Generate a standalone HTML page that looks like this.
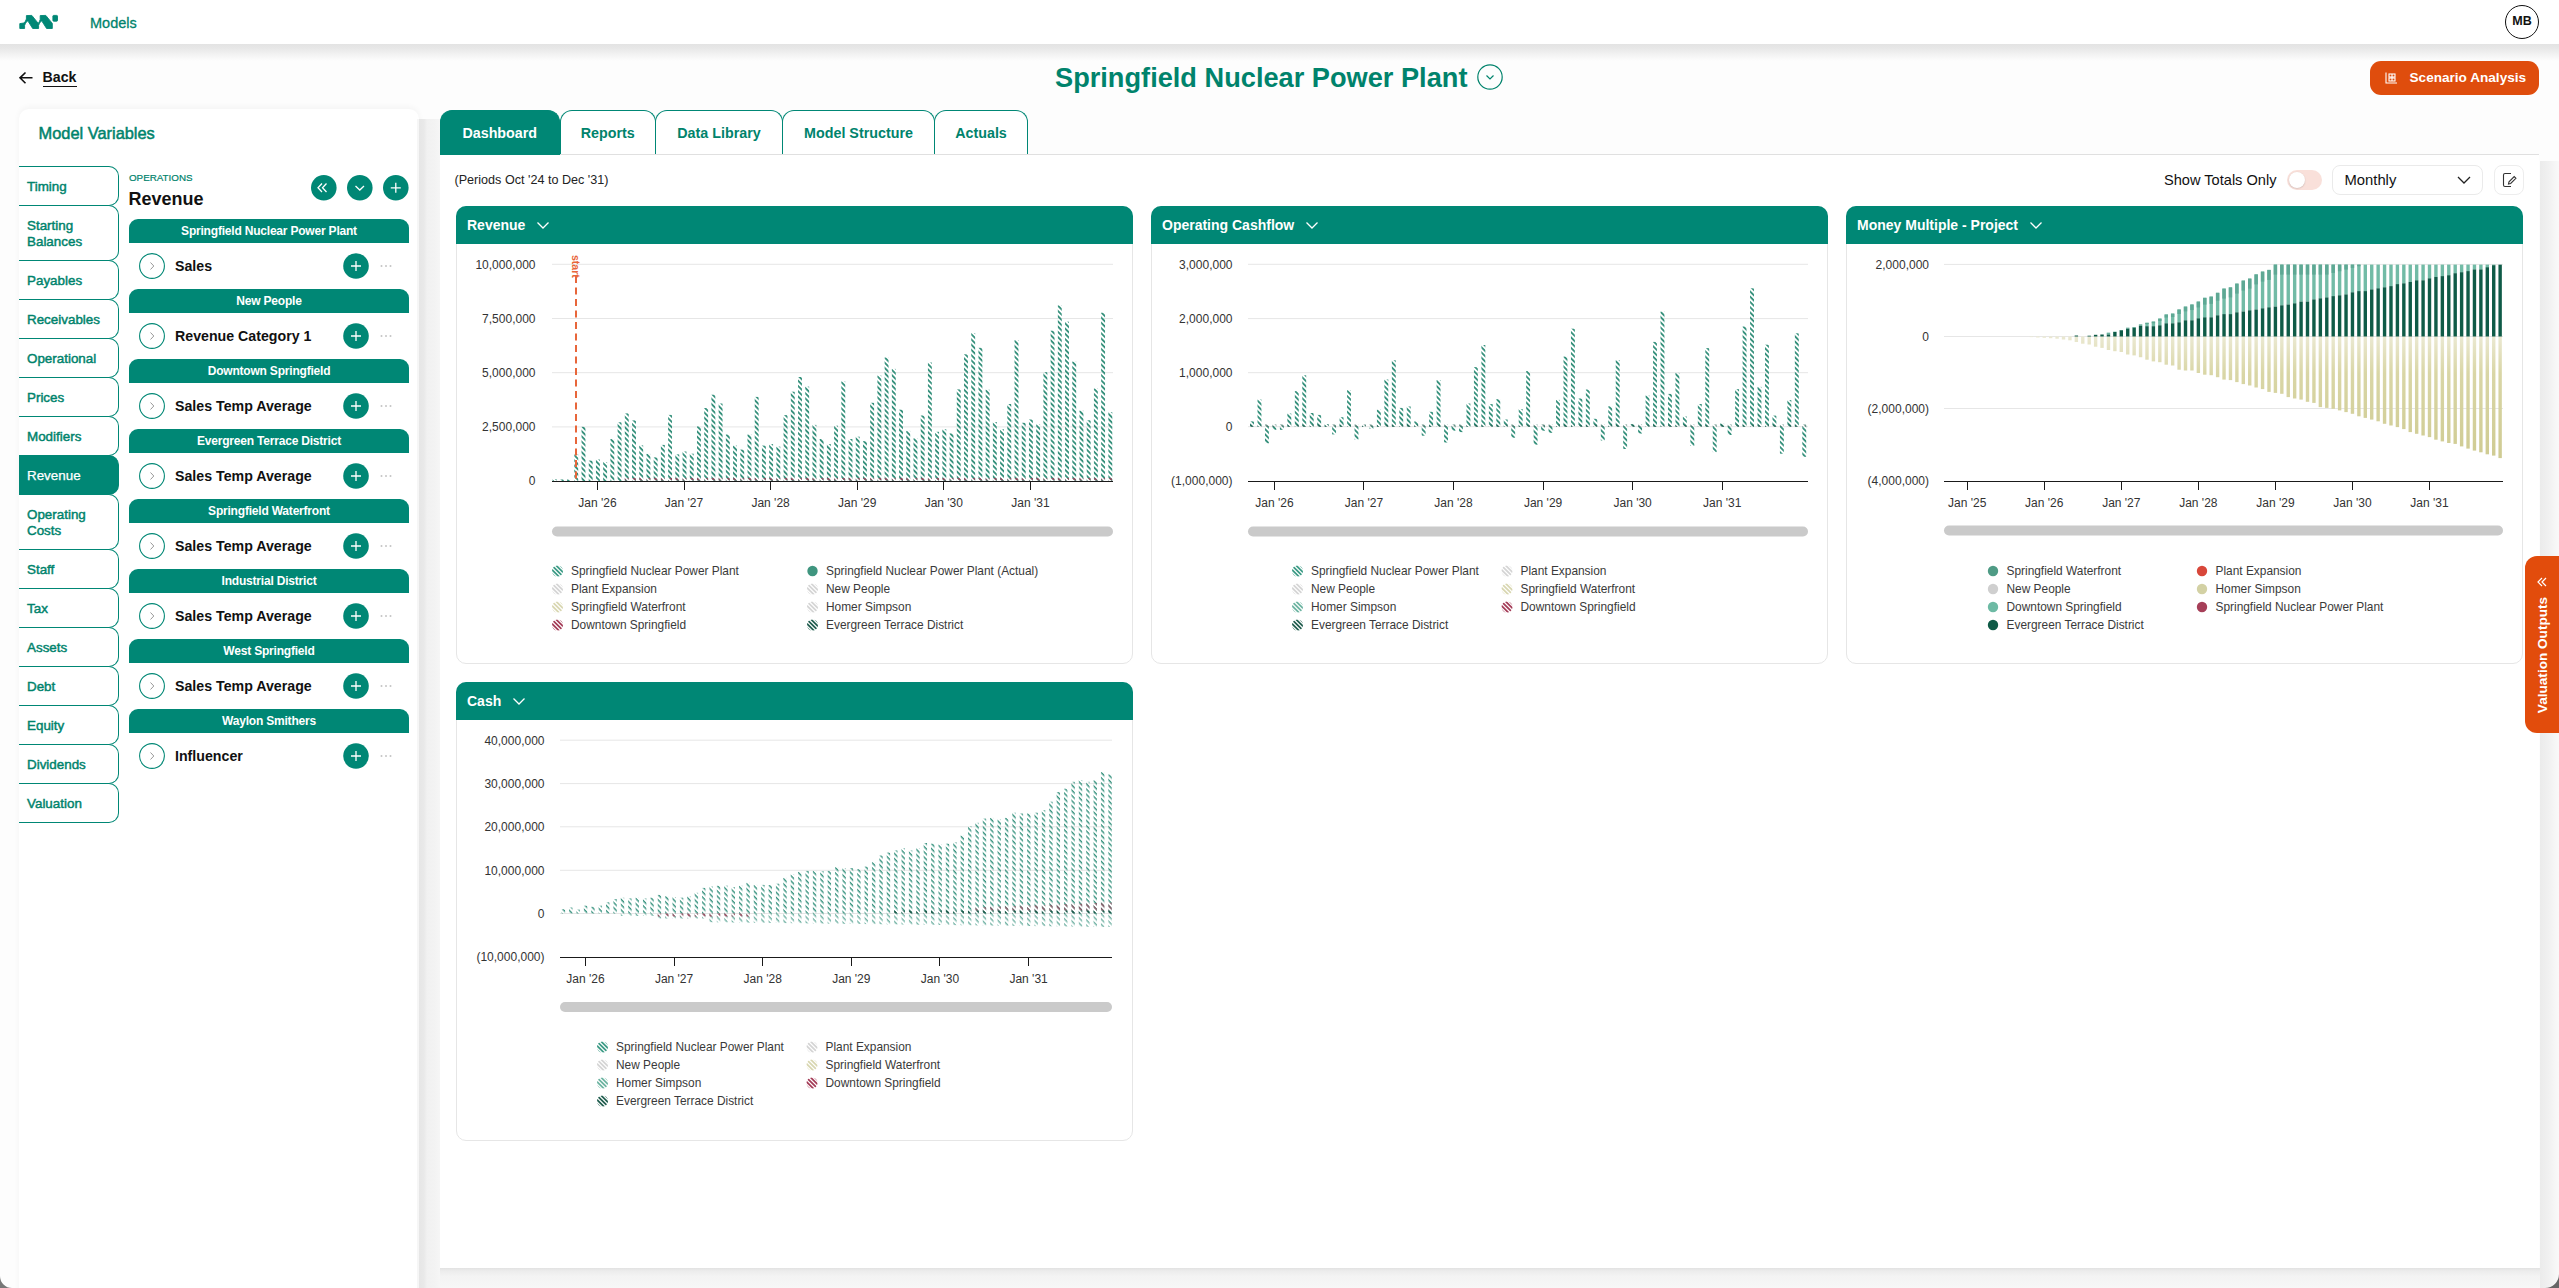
<!DOCTYPE html>
<html><head><meta charset="utf-8"><style>
*{box-sizing:border-box}
html,body{margin:0;padding:0}
body{width:2559px;height:1288px;overflow:hidden;position:relative;background:#fdfdfd;font-family:"Liberation Sans", sans-serif;}
.a{position:absolute}
.t{position:absolute;white-space:nowrap;line-height:1}
.navtab{position:absolute;left:19px;width:100px;border:1.3px solid #008775;border-left:none;border-radius:0 10px 10px 0;background:#fff;color:#00836c;font-size:13.4px;-webkit-text-stroke:0.45px #00836c;padding-left:8px;padding-top:1.5px;display:flex;align-items:center;line-height:16px}
.grp{position:absolute;left:129px;width:280px;height:23.5px;background:#008775;border-radius:9px 9px 0 0;color:#fff;font-weight:bold;font-size:12px;text-align:center;line-height:25px;letter-spacing:-0.2px}
.rowc{position:absolute;left:139px;width:26px;height:26px;border:1.1px solid #008775;border-radius:50%}
.rowt{position:absolute;left:175px;font-weight:bold;font-size:14.2px;color:#111;white-space:nowrap;line-height:1}
.plus{position:absolute;left:343px;width:26px;height:26px;border-radius:50%;background:#008775}
.tab{position:absolute;top:110px;height:44px;border:1.3px solid #008775;border-bottom:none;border-radius:12px 12px 0 0;background:#fff;color:#00836c;font-weight:bold;font-size:14.3px;text-align:center;line-height:44px}
.card{position:absolute;width:677px;border:1px solid #e6e6e6;border-radius:10px;background:#fff}
.chd{position:absolute;left:-1px;top:-1px;right:-1px;height:38px;background:#008775;border-radius:10px 10px 0 0;color:#fff;font-weight:bold;font-size:14px;line-height:38px;padding-left:11px;display:flex;align-items:center}
</style></head><body>

<div class="a" style="left:0;top:0;width:2559px;height:44px;background:#fff;z-index:2"></div>
<div class="a" style="left:0;top:44px;width:2559px;height:17px;background:linear-gradient(to bottom,#e3e3e3 0,#e7e7e7 4px,#eeeeee 8px,#f5f5f5 12px,#fdfdfd 17px);z-index:2"></div>
<svg class="a" style="left:0;top:0;z-index:3" width="70" height="44" viewBox="0 0 70 44">
<g fill="#008775" stroke="#008775" stroke-width="0.9" stroke-linejoin="round">
<path d="M19.8,28.5 L19.8,23.6 L24,23 Q25.6,21.5 26.4,19 L26.4,15.6 L31.8,15.4 L38.3,23.4 Q39.4,21.8 40.2,19.6 L40.2,15.6 L45.8,15.4 L52.3,23.4 L52.3,28.5 L46.6,28.5 L42.2,21.6 Q41.6,20.6 40.8,21.4 Q39.2,23.2 38.6,25.4 L38.6,28.5 L32.7,28.5 L28.3,21.6 Q27.7,20.6 26.9,21.4 Q25.2,23.2 24.6,25.4 L24.6,28.5 Z"/>
<rect x="52.9" y="15.4" width="4.6" height="5.8" rx="0.8"/>
</g>
</svg>
<div class="t" style="left:90px;top:15.5px;font-size:14.5px;color:#00836c;-webkit-text-stroke:0.3px #00836c;z-index:3">Models</div>
<div class="a" style="left:2505px;top:5px;width:34px;height:34px;border:1.4px solid #111;border-radius:50%;z-index:3;font-weight:bold;font-size:12.5px;color:#111;text-align:center;line-height:31px">MB</div>
<svg class="a" style="left:17px;top:70px" width="20" height="16" viewBox="0 0 20 16"><path d="M3,7.8 H15.5 M8.5,2.5 L3,7.8 L8.5,13.2" stroke="#111" stroke-width="1.6" fill="none"/></svg>
<div class="t" style="left:42.5px;top:70px;font-size:14.2px;font-weight:bold;color:#111">Back</div>
<div class="a" style="left:43px;top:85.5px;width:34px;height:1.5px;background:#111"></div>
<div class="t" style="left:1055px;top:63.7px;font-size:27.2px;font-weight:bold;color:#00836c">Springfield Nuclear Power Plant</div>
<svg class="a" style="left:1476px;top:63px" width="28" height="28" viewBox="0 0 28 28"><circle cx="14" cy="14" r="12.2" fill="none" stroke="#00836c" stroke-width="1.2"/><path d="M10.5,12.5 L14,16 L17.5,12.5" stroke="#00836c" stroke-width="1.2" fill="none"/></svg>
<div class="a" style="left:2370px;top:61px;width:169px;height:34px;background:#df4d0d;border-radius:11px"></div>
<svg class="a" style="left:2383px;top:70px" width="16" height="16" viewBox="0 0 16 16" fill="none" stroke="#fff" stroke-width="1.1"><path d="M3,2.5 V13 H14"/><rect x="6" y="4" width="6" height="3"/><rect x="6" y="8" width="6" height="3"/><path d="M9,4 V11"/></svg>
<div class="t" style="left:2409.5px;top:71px;font-size:13.6px;font-weight:bold;color:#fff">Scenario Analysis</div>
<div class="a" style="left:19px;top:109px;width:400px;height:1200px;background:#fff;border-radius:10px;box-shadow:0 -2px 6px rgba(0,0,0,0.04)"></div>
<div class="a" style="left:419px;top:119px;width:21px;height:1169px;background:linear-gradient(to right,#e6e6e6 0,#e9e9e9 5px,#f1f1f1 8px,#f3f3f3 16px,#f6f6f6 21px)"></div>
<div class="a" style="left:416.5px;top:119px;width:2px;height:1169px;background:#f6f6f6"></div>
<div class="t" style="left:38.5px;top:125px;font-size:16.4px;color:#00836c;-webkit-text-stroke:0.5px #00836c">Model Variables</div>
<div class="navtab" style="top:166px;height:40px">Timing</div>
<div class="navtab" style="top:205px;height:56px">Starting<br>Balances</div>
<div class="navtab" style="top:260px;height:40px">Payables</div>
<div class="navtab" style="top:299px;height:40px">Receivables</div>
<div class="navtab" style="top:338px;height:40px">Operational</div>
<div class="navtab" style="top:377px;height:40px">Prices</div>
<div class="navtab" style="top:416px;height:40px">Modifiers</div>
<div class="navtab" style="top:455px;height:40px;background:#008775;color:#fff;-webkit-text-stroke:0.25px #fff;border-color:#008775">Revenue</div>
<div class="navtab" style="top:494px;height:56px">Operating<br>Costs</div>
<div class="navtab" style="top:549px;height:40px">Staff</div>
<div class="navtab" style="top:588px;height:40px">Tax</div>
<div class="navtab" style="top:627px;height:40px">Assets</div>
<div class="navtab" style="top:666px;height:40px">Debt</div>
<div class="navtab" style="top:705px;height:40px">Equity</div>
<div class="navtab" style="top:744px;height:40px">Dividends</div>
<div class="navtab" style="top:783px;height:40px">Valuation</div>
<div class="t" style="left:129px;top:172.5px;font-size:9.8px;color:#00836c;-webkit-text-stroke:0.2px #00836c">OPERATIONS</div>
<div class="t" style="left:128.5px;top:189.5px;font-size:18px;font-weight:bold;color:#111">Revenue</div>
<svg class="a" style="left:311.2px;top:175px" width="25.6" height="25.6" viewBox="0 0 25.6 25.6"><circle cx="12.8" cy="12.8" r="12.8" fill="#008775"/><path d="M11,8.5 L7,12.8 L11,17 M15.5,8.5 L11.5,12.8 L15.5,17" stroke="#fff" stroke-width="1.3" fill="none"/></svg>
<svg class="a" style="left:347.0px;top:175px" width="25.6" height="25.6" viewBox="0 0 25.6 25.6"><circle cx="12.8" cy="12.8" r="12.8" fill="#008775"/><path d="M8.5,11 L12.8,15 L17,11" stroke="#fff" stroke-width="1.3" fill="none"/></svg>
<svg class="a" style="left:383.2px;top:175px" width="25.6" height="25.6" viewBox="0 0 25.6 25.6"><circle cx="12.8" cy="12.8" r="12.8" fill="#008775"/><path d="M12.8,7.8 V17.8 M7.8,12.8 H17.8" stroke="#fff" stroke-width="1.3" fill="none"/></svg>
<div class="grp" style="top:219px">Springfield Nuclear Power Plant</div>
<svg class="a" style="left:139px;top:253px" width="26" height="26" viewBox="0 0 26 26"><circle cx="13" cy="13" r="12.4" fill="none" stroke="#008775" stroke-width="1.1"/><path d="M11.5,9.5 L14.8,13 L11.5,16.5" stroke="#999" stroke-width="1" fill="none"/></svg>
<div class="rowt" style="top:258.5px">Sales</div>
<svg class="a" style="left:343px;top:253px" width="26" height="26" viewBox="0 0 26 26"><circle cx="13" cy="13" r="12.8" fill="#008775"/><path d="M13,8 V18 M8,13 H18" stroke="#fff" stroke-width="1.3" fill="none"/></svg>
<svg class="a" style="left:379px;top:263px" width="14" height="6" viewBox="0 0 14 6"><g fill="#c4c4c4"><circle cx="2.5" cy="3" r="1"/><circle cx="7" cy="3" r="1"/><circle cx="11.5" cy="3" r="1"/></g></svg>
<div class="grp" style="top:289px">New People</div>
<svg class="a" style="left:139px;top:323px" width="26" height="26" viewBox="0 0 26 26"><circle cx="13" cy="13" r="12.4" fill="none" stroke="#008775" stroke-width="1.1"/><path d="M11.5,9.5 L14.8,13 L11.5,16.5" stroke="#999" stroke-width="1" fill="none"/></svg>
<div class="rowt" style="top:328.5px">Revenue Category 1</div>
<svg class="a" style="left:343px;top:323px" width="26" height="26" viewBox="0 0 26 26"><circle cx="13" cy="13" r="12.8" fill="#008775"/><path d="M13,8 V18 M8,13 H18" stroke="#fff" stroke-width="1.3" fill="none"/></svg>
<svg class="a" style="left:379px;top:333px" width="14" height="6" viewBox="0 0 14 6"><g fill="#c4c4c4"><circle cx="2.5" cy="3" r="1"/><circle cx="7" cy="3" r="1"/><circle cx="11.5" cy="3" r="1"/></g></svg>
<div class="grp" style="top:359px">Downtown Springfield</div>
<svg class="a" style="left:139px;top:393px" width="26" height="26" viewBox="0 0 26 26"><circle cx="13" cy="13" r="12.4" fill="none" stroke="#008775" stroke-width="1.1"/><path d="M11.5,9.5 L14.8,13 L11.5,16.5" stroke="#999" stroke-width="1" fill="none"/></svg>
<div class="rowt" style="top:398.5px">Sales Temp Average</div>
<svg class="a" style="left:343px;top:393px" width="26" height="26" viewBox="0 0 26 26"><circle cx="13" cy="13" r="12.8" fill="#008775"/><path d="M13,8 V18 M8,13 H18" stroke="#fff" stroke-width="1.3" fill="none"/></svg>
<svg class="a" style="left:379px;top:403px" width="14" height="6" viewBox="0 0 14 6"><g fill="#c4c4c4"><circle cx="2.5" cy="3" r="1"/><circle cx="7" cy="3" r="1"/><circle cx="11.5" cy="3" r="1"/></g></svg>
<div class="grp" style="top:429px">Evergreen Terrace District</div>
<svg class="a" style="left:139px;top:463px" width="26" height="26" viewBox="0 0 26 26"><circle cx="13" cy="13" r="12.4" fill="none" stroke="#008775" stroke-width="1.1"/><path d="M11.5,9.5 L14.8,13 L11.5,16.5" stroke="#999" stroke-width="1" fill="none"/></svg>
<div class="rowt" style="top:468.5px">Sales Temp Average</div>
<svg class="a" style="left:343px;top:463px" width="26" height="26" viewBox="0 0 26 26"><circle cx="13" cy="13" r="12.8" fill="#008775"/><path d="M13,8 V18 M8,13 H18" stroke="#fff" stroke-width="1.3" fill="none"/></svg>
<svg class="a" style="left:379px;top:473px" width="14" height="6" viewBox="0 0 14 6"><g fill="#c4c4c4"><circle cx="2.5" cy="3" r="1"/><circle cx="7" cy="3" r="1"/><circle cx="11.5" cy="3" r="1"/></g></svg>
<div class="grp" style="top:499px">Springfield Waterfront</div>
<svg class="a" style="left:139px;top:533px" width="26" height="26" viewBox="0 0 26 26"><circle cx="13" cy="13" r="12.4" fill="none" stroke="#008775" stroke-width="1.1"/><path d="M11.5,9.5 L14.8,13 L11.5,16.5" stroke="#999" stroke-width="1" fill="none"/></svg>
<div class="rowt" style="top:538.5px">Sales Temp Average</div>
<svg class="a" style="left:343px;top:533px" width="26" height="26" viewBox="0 0 26 26"><circle cx="13" cy="13" r="12.8" fill="#008775"/><path d="M13,8 V18 M8,13 H18" stroke="#fff" stroke-width="1.3" fill="none"/></svg>
<svg class="a" style="left:379px;top:543px" width="14" height="6" viewBox="0 0 14 6"><g fill="#c4c4c4"><circle cx="2.5" cy="3" r="1"/><circle cx="7" cy="3" r="1"/><circle cx="11.5" cy="3" r="1"/></g></svg>
<div class="grp" style="top:569px">Industrial District</div>
<svg class="a" style="left:139px;top:603px" width="26" height="26" viewBox="0 0 26 26"><circle cx="13" cy="13" r="12.4" fill="none" stroke="#008775" stroke-width="1.1"/><path d="M11.5,9.5 L14.8,13 L11.5,16.5" stroke="#999" stroke-width="1" fill="none"/></svg>
<div class="rowt" style="top:608.5px">Sales Temp Average</div>
<svg class="a" style="left:343px;top:603px" width="26" height="26" viewBox="0 0 26 26"><circle cx="13" cy="13" r="12.8" fill="#008775"/><path d="M13,8 V18 M8,13 H18" stroke="#fff" stroke-width="1.3" fill="none"/></svg>
<svg class="a" style="left:379px;top:613px" width="14" height="6" viewBox="0 0 14 6"><g fill="#c4c4c4"><circle cx="2.5" cy="3" r="1"/><circle cx="7" cy="3" r="1"/><circle cx="11.5" cy="3" r="1"/></g></svg>
<div class="grp" style="top:639px">West Springfield</div>
<svg class="a" style="left:139px;top:673px" width="26" height="26" viewBox="0 0 26 26"><circle cx="13" cy="13" r="12.4" fill="none" stroke="#008775" stroke-width="1.1"/><path d="M11.5,9.5 L14.8,13 L11.5,16.5" stroke="#999" stroke-width="1" fill="none"/></svg>
<div class="rowt" style="top:678.5px">Sales Temp Average</div>
<svg class="a" style="left:343px;top:673px" width="26" height="26" viewBox="0 0 26 26"><circle cx="13" cy="13" r="12.8" fill="#008775"/><path d="M13,8 V18 M8,13 H18" stroke="#fff" stroke-width="1.3" fill="none"/></svg>
<svg class="a" style="left:379px;top:683px" width="14" height="6" viewBox="0 0 14 6"><g fill="#c4c4c4"><circle cx="2.5" cy="3" r="1"/><circle cx="7" cy="3" r="1"/><circle cx="11.5" cy="3" r="1"/></g></svg>
<div class="grp" style="top:709px">Waylon Smithers</div>
<svg class="a" style="left:139px;top:743px" width="26" height="26" viewBox="0 0 26 26"><circle cx="13" cy="13" r="12.4" fill="none" stroke="#008775" stroke-width="1.1"/><path d="M11.5,9.5 L14.8,13 L11.5,16.5" stroke="#999" stroke-width="1" fill="none"/></svg>
<div class="rowt" style="top:748.5px">Influencer</div>
<svg class="a" style="left:343px;top:743px" width="26" height="26" viewBox="0 0 26 26"><circle cx="13" cy="13" r="12.8" fill="#008775"/><path d="M13,8 V18 M8,13 H18" stroke="#fff" stroke-width="1.3" fill="none"/></svg>
<svg class="a" style="left:379px;top:753px" width="14" height="6" viewBox="0 0 14 6"><g fill="#c4c4c4"><circle cx="2.5" cy="3" r="1"/><circle cx="7" cy="3" r="1"/><circle cx="11.5" cy="3" r="1"/></g></svg>
<div class="a" style="left:440px;top:154px;width:2099px;height:1114px;background:#fff;border-top:1px solid #e0e0e0"></div>
<div class="a" style="left:2539.5px;top:161px;width:20px;height:1127px;background:linear-gradient(to right,#ebebeb 0,#f0f0f0 8px,#f6f6f6 15px,#fafafa 20px)"></div>
<div class="a" style="left:440px;top:1268px;width:2100px;height:20px;background:linear-gradient(to bottom,#e2e2e2 0,#ececec 3px,#f3f3f3 8px,#f7f7f7 20px)"></div>
<div class="tab" style="left:440px;width:119.5px;height:44.5px;background:#008775;color:#fff;border-color:#008775">Dashboard</div>
<div class="tab" style="left:559.5px;width:96.5px">Reports</div>
<div class="tab" style="left:655px;width:128px">Data Library</div>
<div class="tab" style="left:782px;width:153px">Model Structure</div>
<div class="tab" style="left:934px;width:94px">Actuals</div>
<div class="t" style="left:454.5px;top:174px;font-size:12.6px;color:#222">(Periods Oct '24 to Dec '31)</div>
<div class="t" style="left:2164px;top:173px;font-size:14.6px;color:#111">Show Totals Only</div>
<div class="a" style="left:2287px;top:170px;width:35px;height:20px;border-radius:10px;background:#f9e0da"></div>
<div class="a" style="left:2288.5px;top:172px;width:16px;height:16px;border-radius:50%;background:#fff;box-shadow:0 0.5px 1.5px rgba(0,0,0,0.2)"></div>
<div class="a" style="left:2332px;top:165px;width:151px;height:30px;border:1px solid #eaeaea;border-radius:8px;background:#fff"></div>
<div class="t" style="left:2344.5px;top:172.5px;font-size:14.8px;color:#111">Monthly</div>
<svg class="a" style="left:2456px;top:173px" width="16" height="14" viewBox="0 0 16 14"><path d="M2,4 L8,10 L14,4" stroke="#222" stroke-width="1.3" fill="none"/></svg>
<div class="a" style="left:2494px;top:165px;width:30px;height:30px;border:1px solid #ededed;border-radius:8px;background:#fff"></div>
<svg class="a" style="left:2500px;top:171px" width="18" height="18" viewBox="0 0 18 18" fill="none" stroke="#333" stroke-width="1.1"><path d="M11,2.5 H5 Q3.5,2.5 3.5,4 V14 Q3.5,15.5 5,15.5 H11"/><path d="M8.5,13 L9,10.8 L14.2,5.6 L15.9,7.3 L10.7,12.5 Z"/></svg>
<div class="card" style="left:456px;top:206px;height:458px"><div class="chd"><span>Revenue</span><svg style="margin-left:10.5px;margin-top:1px" width="14" height="9" viewBox="0 0 14 9"><path d="M1.5,1.5 L7,7 L12.5,1.5" stroke="#fff" stroke-width="1.3" fill="none"/></svg></div></div>
<div class="card" style="left:1151px;top:206px;height:458px"><div class="chd"><span>Operating Cashflow</span><svg style="margin-left:10.5px;margin-top:1px" width="14" height="9" viewBox="0 0 14 9"><path d="M1.5,1.5 L7,7 L12.5,1.5" stroke="#fff" stroke-width="1.3" fill="none"/></svg></div></div>
<div class="card" style="left:1846px;top:206px;height:458px"><div class="chd"><span>Money Multiple - Project</span><svg style="margin-left:10.5px;margin-top:1px" width="14" height="9" viewBox="0 0 14 9"><path d="M1.5,1.5 L7,7 L12.5,1.5" stroke="#fff" stroke-width="1.3" fill="none"/></svg></div></div>
<div class="card" style="left:456px;top:682px;height:459px"><div class="chd"><span>Cash</span><svg style="margin-left:10.5px;margin-top:1px" width="14" height="9" viewBox="0 0 14 9"><path d="M1.5,1.5 L7,7 L12.5,1.5" stroke="#fff" stroke-width="1.3" fill="none"/></svg></div></div>
<div class="a" style="left:2524.5px;top:556px;width:40px;height:177px;background:#e24c0c;border-radius:12px 0 0 12px"></div>
<svg class="a" style="left:2535px;top:575px" width="14" height="14" viewBox="0 0 14 14"><path d="M7,3 L3,7 L7,11 M11,3 L7,7 L11,11" stroke="#fff" stroke-width="1.2" fill="none"/></svg>
<div class="t" style="left:2542.5px;top:655px;font-size:13.6px;font-weight:bold;color:#fff;transform:translate(-50%,-50%) rotate(-90deg)">Valuation Outputs</div>
<svg class="a" style="left:0;top:0" width="2559" height="1288" viewBox="0 0 2559 1288">
<defs>
<clipPath id="lc"><circle cx="0" cy="0" r="5.5"/></clipPath>
<pattern id="hT" width="3.7" height="3.7" patternUnits="userSpaceOnUse" patternTransform="rotate(45)"><rect x="0" y="0" width="3.7" height="1.8" fill="#338f7a"/></pattern>
<pattern id="hD" width="3.7" height="3.7" patternUnits="userSpaceOnUse" patternTransform="rotate(45)"><rect x="0" y="0" width="3.7" height="1.8" fill="#1f5c4d"/></pattern>
<pattern id="hR" width="3.7" height="3.7" patternUnits="userSpaceOnUse" patternTransform="rotate(45)"><rect x="0" y="0" width="3.7" height="1.8" fill="#a33a56"/></pattern>
<pattern id="hC" width="3.7" height="3.7" patternUnits="userSpaceOnUse" patternTransform="rotate(45)"><rect x="0" y="0" width="3.7" height="1.45" fill="#3a9480"/></pattern>
<linearGradient id="gB" gradientUnits="userSpaceOnUse" x1="0" y1="336" x2="0" y2="460"><stop offset="0" stop-color="#ebe9d2"/><stop offset="0.3" stop-color="#d9d6a6"/><stop offset="1" stop-color="#cfcb92"/></linearGradient>
</defs>
<line x1="552" y1="264.3" x2="1113" y2="264.3" stroke="#e6e6e6" stroke-width="1"/>
<text x="535.5" y="268.6" text-anchor="end" style="font-family:'Liberation Sans',sans-serif;font-size:12px;fill:#333">10,000,000</text>
<line x1="552" y1="318.5" x2="1113" y2="318.5" stroke="#e6e6e6" stroke-width="1"/>
<text x="535.5" y="322.8" text-anchor="end" style="font-family:'Liberation Sans',sans-serif;font-size:12px;fill:#333">7,500,000</text>
<line x1="552" y1="372.7" x2="1113" y2="372.7" stroke="#e6e6e6" stroke-width="1"/>
<text x="535.5" y="377.0" text-anchor="end" style="font-family:'Liberation Sans',sans-serif;font-size:12px;fill:#333">5,000,000</text>
<line x1="552" y1="426.9" x2="1113" y2="426.9" stroke="#e6e6e6" stroke-width="1"/>
<text x="535.5" y="431.2" text-anchor="end" style="font-family:'Liberation Sans',sans-serif;font-size:12px;fill:#333">2,500,000</text>
<text x="535.5" y="485.3" text-anchor="end" style="font-family:'Liberation Sans',sans-serif;font-size:12px;fill:#333">0</text>
<line x1="552" y1="481.5" x2="1113" y2="481.5" stroke="#1a1a1a" stroke-width="1.1"/>
<line x1="597.5" y1="481" x2="597.5" y2="490" stroke="#1a1a1a" stroke-width="1"/>
<text x="597.4" y="507" text-anchor="middle" style="font-family:'Liberation Sans',sans-serif;font-size:12px;fill:#333">Jan '26</text>
<line x1="684.5" y1="481" x2="684.5" y2="490" stroke="#1a1a1a" stroke-width="1"/>
<text x="684.0" y="507" text-anchor="middle" style="font-family:'Liberation Sans',sans-serif;font-size:12px;fill:#333">Jan '27</text>
<line x1="770.5" y1="481" x2="770.5" y2="490" stroke="#1a1a1a" stroke-width="1"/>
<text x="770.5999999999999" y="507" text-anchor="middle" style="font-family:'Liberation Sans',sans-serif;font-size:12px;fill:#333">Jan '28</text>
<line x1="857.5" y1="481" x2="857.5" y2="490" stroke="#1a1a1a" stroke-width="1"/>
<text x="857.1999999999999" y="507" text-anchor="middle" style="font-family:'Liberation Sans',sans-serif;font-size:12px;fill:#333">Jan '29</text>
<line x1="943.5" y1="481" x2="943.5" y2="490" stroke="#1a1a1a" stroke-width="1"/>
<text x="943.8" y="507" text-anchor="middle" style="font-family:'Liberation Sans',sans-serif;font-size:12px;fill:#333">Jan '30</text>
<line x1="1030.5" y1="481" x2="1030.5" y2="490" stroke="#1a1a1a" stroke-width="1"/>
<text x="1030.4" y="507" text-anchor="middle" style="font-family:'Liberation Sans',sans-serif;font-size:12px;fill:#333">Jan '31</text>
<rect x="552" y="526.5" width="561" height="10" rx="5" fill="#cacaca"/>
<rect x="552.65" y="479.10" width="3.9" height="1.90" fill="url(#hT)"/>
<rect x="559.87" y="479.50" width="3.9" height="1.50" fill="url(#hT)"/>
<rect x="567.08" y="479.50" width="3.9" height="1.50" fill="url(#hT)"/>
<rect x="574.30" y="454.40" width="3.9" height="26.60" fill="url(#hT)"/>
<rect x="581.52" y="426.80" width="3.9" height="54.20" fill="url(#hT)"/>
<rect x="588.74" y="460.60" width="3.9" height="20.40" fill="url(#hT)"/>
<rect x="595.95" y="459.50" width="3.9" height="21.50" fill="url(#hT)"/>
<rect x="603.17" y="462.10" width="3.9" height="18.90" fill="url(#hT)"/>
<rect x="610.39" y="439.10" width="3.9" height="41.90" fill="url(#hT)"/>
<rect x="617.60" y="422.30" width="3.9" height="58.70" fill="url(#hT)"/>
<rect x="624.82" y="413.40" width="3.9" height="67.60" fill="url(#hT)"/>
<rect x="624.82" y="478.00" width="3.9" height="2.5" fill="url(#hR)" opacity="0.8"/>
<rect x="632.04" y="420.40" width="3.9" height="60.60" fill="url(#hT)"/>
<rect x="632.04" y="478.00" width="3.9" height="2.5" fill="url(#hR)" opacity="0.8"/>
<rect x="639.25" y="445.40" width="3.9" height="35.60" fill="url(#hT)"/>
<rect x="639.25" y="478.00" width="3.9" height="2.5" fill="url(#hR)" opacity="0.8"/>
<rect x="646.47" y="453.90" width="3.9" height="27.10" fill="url(#hT)"/>
<rect x="646.47" y="478.00" width="3.9" height="2.5" fill="url(#hR)" opacity="0.8"/>
<rect x="653.69" y="457.40" width="3.9" height="23.60" fill="url(#hT)"/>
<rect x="653.69" y="478.00" width="3.9" height="2.5" fill="url(#hR)" opacity="0.8"/>
<rect x="660.90" y="444.90" width="3.9" height="36.10" fill="url(#hT)"/>
<rect x="660.90" y="478.00" width="3.9" height="2.5" fill="url(#hR)" opacity="0.8"/>
<rect x="668.12" y="414.90" width="3.9" height="66.10" fill="url(#hT)"/>
<rect x="668.12" y="478.00" width="3.9" height="2.5" fill="url(#hR)" opacity="0.8"/>
<rect x="675.34" y="454.40" width="3.9" height="26.60" fill="url(#hT)"/>
<rect x="675.34" y="478.00" width="3.9" height="2.5" fill="url(#hR)" opacity="0.8"/>
<rect x="682.56" y="451.50" width="3.9" height="29.50" fill="url(#hT)"/>
<rect x="682.56" y="478.00" width="3.9" height="2.5" fill="url(#hR)" opacity="0.8"/>
<rect x="689.77" y="453.70" width="3.9" height="27.30" fill="url(#hT)"/>
<rect x="689.77" y="478.00" width="3.9" height="2.5" fill="url(#hR)" opacity="0.8"/>
<rect x="696.99" y="426.40" width="3.9" height="54.60" fill="url(#hT)"/>
<rect x="696.99" y="478.00" width="3.9" height="2.5" fill="url(#hR)" opacity="0.8"/>
<rect x="704.21" y="408.00" width="3.9" height="73.00" fill="url(#hT)"/>
<rect x="704.21" y="478.00" width="3.9" height="2.5" fill="url(#hR)" opacity="0.8"/>
<rect x="711.42" y="394.70" width="3.9" height="86.30" fill="url(#hT)"/>
<rect x="711.42" y="478.00" width="3.9" height="2.5" fill="url(#hR)" opacity="0.8"/>
<rect x="718.64" y="403.50" width="3.9" height="77.50" fill="url(#hT)"/>
<rect x="718.64" y="478.00" width="3.9" height="2.5" fill="url(#hR)" opacity="0.8"/>
<rect x="725.86" y="434.50" width="3.9" height="46.50" fill="url(#hT)"/>
<rect x="725.86" y="478.00" width="3.9" height="2.5" fill="url(#hR)" opacity="0.8"/>
<rect x="733.07" y="445.60" width="3.9" height="35.40" fill="url(#hT)"/>
<rect x="733.07" y="478.00" width="3.9" height="2.5" fill="url(#hR)" opacity="0.8"/>
<rect x="740.29" y="449.60" width="3.9" height="31.40" fill="url(#hT)"/>
<rect x="740.29" y="478.00" width="3.9" height="2.5" fill="url(#hR)" opacity="0.8"/>
<rect x="747.51" y="434.50" width="3.9" height="46.50" fill="url(#hT)"/>
<rect x="747.51" y="478.00" width="3.9" height="2.5" fill="url(#hR)" opacity="0.8"/>
<rect x="754.73" y="396.90" width="3.9" height="84.10" fill="url(#hT)"/>
<rect x="754.73" y="478.00" width="3.9" height="2.5" fill="url(#hR)" opacity="0.8"/>
<rect x="761.94" y="445.60" width="3.9" height="35.40" fill="url(#hT)"/>
<rect x="761.94" y="478.00" width="3.9" height="2.5" fill="url(#hR)" opacity="0.8"/>
<rect x="769.16" y="444.10" width="3.9" height="36.90" fill="url(#hT)"/>
<rect x="769.16" y="478.00" width="3.9" height="2.5" fill="url(#hR)" opacity="0.8"/>
<rect x="776.38" y="446.60" width="3.9" height="34.40" fill="url(#hT)"/>
<rect x="776.38" y="478.00" width="3.9" height="2.5" fill="url(#hR)" opacity="0.8"/>
<rect x="783.59" y="415.10" width="3.9" height="65.90" fill="url(#hT)"/>
<rect x="783.59" y="478.00" width="3.9" height="2.5" fill="url(#hR)" opacity="0.8"/>
<rect x="790.81" y="391.70" width="3.9" height="89.30" fill="url(#hT)"/>
<rect x="790.81" y="478.00" width="3.9" height="2.5" fill="url(#hR)" opacity="0.8"/>
<rect x="798.03" y="377.00" width="3.9" height="104.00" fill="url(#hT)"/>
<rect x="798.03" y="478.00" width="3.9" height="2.5" fill="url(#hR)" opacity="0.8"/>
<rect x="805.25" y="386.60" width="3.9" height="94.40" fill="url(#hT)"/>
<rect x="805.25" y="478.00" width="3.9" height="2.5" fill="url(#hR)" opacity="0.8"/>
<rect x="812.46" y="424.90" width="3.9" height="56.10" fill="url(#hT)"/>
<rect x="812.46" y="478.00" width="3.9" height="2.5" fill="url(#hR)" opacity="0.8"/>
<rect x="819.68" y="439.00" width="3.9" height="42.00" fill="url(#hT)"/>
<rect x="819.68" y="478.00" width="3.9" height="2.5" fill="url(#hR)" opacity="0.8"/>
<rect x="826.90" y="444.10" width="3.9" height="36.90" fill="url(#hT)"/>
<rect x="826.90" y="478.00" width="3.9" height="2.5" fill="url(#hR)" opacity="0.8"/>
<rect x="834.11" y="425.70" width="3.9" height="55.30" fill="url(#hT)"/>
<rect x="834.11" y="478.00" width="3.9" height="2.5" fill="url(#hR)" opacity="0.8"/>
<rect x="841.33" y="381.40" width="3.9" height="99.60" fill="url(#hT)"/>
<rect x="841.33" y="478.00" width="3.9" height="2.5" fill="url(#hR)" opacity="0.8"/>
<rect x="848.55" y="439.00" width="3.9" height="42.00" fill="url(#hT)"/>
<rect x="848.55" y="478.00" width="3.9" height="2.5" fill="url(#hR)" opacity="0.8"/>
<rect x="855.76" y="436.70" width="3.9" height="44.30" fill="url(#hT)"/>
<rect x="855.76" y="478.00" width="3.9" height="2.5" fill="url(#hR)" opacity="0.8"/>
<rect x="862.98" y="441.20" width="3.9" height="39.80" fill="url(#hT)"/>
<rect x="862.98" y="478.00" width="3.9" height="2.5" fill="url(#hR)" opacity="0.8"/>
<rect x="870.20" y="402.80" width="3.9" height="78.20" fill="url(#hT)"/>
<rect x="870.20" y="478.00" width="3.9" height="2.5" fill="url(#hR)" opacity="0.8"/>
<rect x="877.41" y="375.50" width="3.9" height="105.50" fill="url(#hT)"/>
<rect x="877.41" y="478.00" width="3.9" height="2.5" fill="url(#hR)" opacity="0.8"/>
<rect x="884.63" y="357.50" width="3.9" height="123.50" fill="url(#hT)"/>
<rect x="884.63" y="478.00" width="3.9" height="2.5" fill="url(#hR)" opacity="0.8"/>
<rect x="891.85" y="368.90" width="3.9" height="112.10" fill="url(#hT)"/>
<rect x="891.85" y="478.00" width="3.9" height="2.5" fill="url(#hR)" opacity="0.8"/>
<rect x="899.07" y="409.70" width="3.9" height="71.30" fill="url(#hT)"/>
<rect x="899.07" y="478.00" width="3.9" height="2.5" fill="url(#hR)" opacity="0.8"/>
<rect x="906.28" y="430.90" width="3.9" height="50.10" fill="url(#hT)"/>
<rect x="906.28" y="478.00" width="3.9" height="2.5" fill="url(#hR)" opacity="0.8"/>
<rect x="913.50" y="438.30" width="3.9" height="42.70" fill="url(#hT)"/>
<rect x="913.50" y="478.00" width="3.9" height="2.5" fill="url(#hR)" opacity="0.8"/>
<rect x="920.72" y="415.50" width="3.9" height="65.50" fill="url(#hT)"/>
<rect x="920.72" y="478.00" width="3.9" height="2.5" fill="url(#hR)" opacity="0.8"/>
<rect x="927.93" y="362.50" width="3.9" height="118.50" fill="url(#hT)"/>
<rect x="927.93" y="478.00" width="3.9" height="2.5" fill="url(#hR)" opacity="0.8"/>
<rect x="935.15" y="431.80" width="3.9" height="49.20" fill="url(#hT)"/>
<rect x="935.15" y="478.00" width="3.9" height="2.5" fill="url(#hR)" opacity="0.8"/>
<rect x="942.37" y="429.30" width="3.9" height="51.70" fill="url(#hT)"/>
<rect x="942.37" y="478.00" width="3.9" height="2.5" fill="url(#hR)" opacity="0.8"/>
<rect x="949.59" y="433.40" width="3.9" height="47.60" fill="url(#hT)"/>
<rect x="949.59" y="478.00" width="3.9" height="2.5" fill="url(#hR)" opacity="0.8"/>
<rect x="956.80" y="389.40" width="3.9" height="91.60" fill="url(#hT)"/>
<rect x="956.80" y="478.00" width="3.9" height="2.5" fill="url(#hR)" opacity="0.8"/>
<rect x="964.02" y="354.30" width="3.9" height="126.70" fill="url(#hT)"/>
<rect x="964.02" y="478.00" width="3.9" height="2.5" fill="url(#hR)" opacity="0.8"/>
<rect x="971.24" y="333.10" width="3.9" height="147.90" fill="url(#hT)"/>
<rect x="971.24" y="478.00" width="3.9" height="2.5" fill="url(#hR)" opacity="0.8"/>
<rect x="978.45" y="347.80" width="3.9" height="133.20" fill="url(#hT)"/>
<rect x="978.45" y="478.00" width="3.9" height="2.5" fill="url(#hR)" opacity="0.8"/>
<rect x="985.67" y="389.70" width="3.9" height="91.30" fill="url(#hT)"/>
<rect x="985.67" y="478.00" width="3.9" height="2.5" fill="url(#hR)" opacity="0.8"/>
<rect x="992.89" y="422.00" width="3.9" height="59.00" fill="url(#hT)"/>
<rect x="992.89" y="478.00" width="3.9" height="2.5" fill="url(#hR)" opacity="0.8"/>
<rect x="1000.10" y="429.30" width="3.9" height="51.70" fill="url(#hT)"/>
<rect x="1000.10" y="478.00" width="3.9" height="2.5" fill="url(#hR)" opacity="0.8"/>
<rect x="1007.32" y="404.00" width="3.9" height="77.00" fill="url(#hT)"/>
<rect x="1007.32" y="478.00" width="3.9" height="2.5" fill="url(#hR)" opacity="0.8"/>
<rect x="1014.54" y="340.10" width="3.9" height="140.90" fill="url(#hT)"/>
<rect x="1014.54" y="478.00" width="3.9" height="2.5" fill="url(#hR)" opacity="0.8"/>
<rect x="1021.75" y="422.80" width="3.9" height="58.20" fill="url(#hT)"/>
<rect x="1021.75" y="478.00" width="3.9" height="2.5" fill="url(#hR)" opacity="0.8"/>
<rect x="1028.97" y="419.50" width="3.9" height="61.50" fill="url(#hT)"/>
<rect x="1028.97" y="478.00" width="3.9" height="2.5" fill="url(#hR)" opacity="0.8"/>
<rect x="1036.19" y="424.40" width="3.9" height="56.60" fill="url(#hT)"/>
<rect x="1036.19" y="478.00" width="3.9" height="2.5" fill="url(#hR)" opacity="0.8"/>
<rect x="1043.41" y="372.20" width="3.9" height="108.80" fill="url(#hT)"/>
<rect x="1043.41" y="478.00" width="3.9" height="2.5" fill="url(#hR)" opacity="0.8"/>
<rect x="1050.62" y="330.70" width="3.9" height="150.30" fill="url(#hT)"/>
<rect x="1050.62" y="478.00" width="3.9" height="2.5" fill="url(#hR)" opacity="0.8"/>
<rect x="1057.84" y="305.40" width="3.9" height="175.60" fill="url(#hT)"/>
<rect x="1057.84" y="478.00" width="3.9" height="2.5" fill="url(#hR)" opacity="0.8"/>
<rect x="1065.06" y="321.70" width="3.9" height="159.30" fill="url(#hT)"/>
<rect x="1065.06" y="478.00" width="3.9" height="2.5" fill="url(#hR)" opacity="0.8"/>
<rect x="1072.27" y="361.60" width="3.9" height="119.40" fill="url(#hT)"/>
<rect x="1072.27" y="478.00" width="3.9" height="2.5" fill="url(#hR)" opacity="0.8"/>
<rect x="1079.49" y="410.60" width="3.9" height="70.40" fill="url(#hT)"/>
<rect x="1079.49" y="478.00" width="3.9" height="2.5" fill="url(#hR)" opacity="0.8"/>
<rect x="1086.71" y="420.30" width="3.9" height="60.70" fill="url(#hT)"/>
<rect x="1086.71" y="478.00" width="3.9" height="2.5" fill="url(#hR)" opacity="0.8"/>
<rect x="1093.92" y="388.50" width="3.9" height="92.50" fill="url(#hT)"/>
<rect x="1093.92" y="478.00" width="3.9" height="2.5" fill="url(#hR)" opacity="0.8"/>
<rect x="1101.14" y="312.70" width="3.9" height="168.30" fill="url(#hT)"/>
<rect x="1101.14" y="478.00" width="3.9" height="2.5" fill="url(#hR)" opacity="0.8"/>
<rect x="1108.36" y="412.20" width="3.9" height="68.80" fill="url(#hT)"/>
<rect x="1108.36" y="478.00" width="3.9" height="2.5" fill="url(#hR)" opacity="0.8"/>
<line x1="576" y1="276" x2="576" y2="481" stroke="#e8663a" stroke-width="2" stroke-dasharray="7,4.5"/>
<text x="0" y="0" transform="translate(572,255) rotate(90)" style="font-family:'Liberation Sans',sans-serif;font-size:10.5px;fill:#e8663a;font-weight:bold">start</text>
<line x1="1248" y1="264.3" x2="1808" y2="264.3" stroke="#e6e6e6" stroke-width="1"/>
<text x="1232.5" y="268.6" text-anchor="end" style="font-family:'Liberation Sans',sans-serif;font-size:12px;fill:#333">3,000,000</text>
<line x1="1248" y1="318.6" x2="1808" y2="318.6" stroke="#e6e6e6" stroke-width="1"/>
<text x="1232.5" y="322.90000000000003" text-anchor="end" style="font-family:'Liberation Sans',sans-serif;font-size:12px;fill:#333">2,000,000</text>
<line x1="1248" y1="372.7" x2="1808" y2="372.7" stroke="#e6e6e6" stroke-width="1"/>
<text x="1232.5" y="377.0" text-anchor="end" style="font-family:'Liberation Sans',sans-serif;font-size:12px;fill:#333">1,000,000</text>
<line x1="1248" y1="426.7" x2="1808" y2="426.7" stroke="#e6e6e6" stroke-width="1"/>
<text x="1232.5" y="431.0" text-anchor="end" style="font-family:'Liberation Sans',sans-serif;font-size:12px;fill:#333">0</text>
<text x="1232.5" y="485.3" text-anchor="end" style="font-family:'Liberation Sans',sans-serif;font-size:12px;fill:#333">(1,000,000)</text>
<line x1="1248" y1="481.5" x2="1808" y2="481.5" stroke="#1a1a1a" stroke-width="1.1"/>
<line x1="1274.5" y1="481" x2="1274.5" y2="490" stroke="#1a1a1a" stroke-width="1"/>
<text x="1274.4" y="507" text-anchor="middle" style="font-family:'Liberation Sans',sans-serif;font-size:12px;fill:#333">Jan '26</text>
<line x1="1363.5" y1="481" x2="1363.5" y2="490" stroke="#1a1a1a" stroke-width="1"/>
<text x="1363.96" y="507" text-anchor="middle" style="font-family:'Liberation Sans',sans-serif;font-size:12px;fill:#333">Jan '27</text>
<line x1="1453.5" y1="481" x2="1453.5" y2="490" stroke="#1a1a1a" stroke-width="1"/>
<text x="1453.52" y="507" text-anchor="middle" style="font-family:'Liberation Sans',sans-serif;font-size:12px;fill:#333">Jan '28</text>
<line x1="1543.5" y1="481" x2="1543.5" y2="490" stroke="#1a1a1a" stroke-width="1"/>
<text x="1543.0800000000002" y="507" text-anchor="middle" style="font-family:'Liberation Sans',sans-serif;font-size:12px;fill:#333">Jan '29</text>
<line x1="1632.5" y1="481" x2="1632.5" y2="490" stroke="#1a1a1a" stroke-width="1"/>
<text x="1632.64" y="507" text-anchor="middle" style="font-family:'Liberation Sans',sans-serif;font-size:12px;fill:#333">Jan '30</text>
<line x1="1722.5" y1="481" x2="1722.5" y2="490" stroke="#1a1a1a" stroke-width="1"/>
<text x="1722.2" y="507" text-anchor="middle" style="font-family:'Liberation Sans',sans-serif;font-size:12px;fill:#333">Jan '31</text>
<rect x="1248" y="526.5" width="560" height="10" rx="5" fill="#cacaca"/>
<rect x="1250.05" y="421.40" width="3.9" height="5.10" fill="url(#hT)"/>
<rect x="1250.05" y="424.5" width="3.9" height="2.5" fill="url(#hD)" opacity="0.7"/>
<rect x="1257.51" y="399.50" width="3.9" height="27.00" fill="url(#hT)"/>
<rect x="1257.51" y="424.5" width="3.9" height="2.5" fill="url(#hD)" opacity="0.7"/>
<rect x="1264.98" y="426.5" width="3.9" height="16.80" fill="url(#hT)"/>
<rect x="1264.98" y="424.5" width="3.9" height="2.5" fill="url(#hD)" opacity="0.7"/>
<rect x="1272.44" y="426.5" width="3.9" height="3.30" fill="url(#hT)"/>
<rect x="1272.44" y="424.5" width="3.9" height="2.5" fill="url(#hD)" opacity="0.7"/>
<rect x="1279.90" y="426.5" width="3.9" height="3.30" fill="url(#hT)"/>
<rect x="1279.90" y="424.5" width="3.9" height="2.5" fill="url(#hD)" opacity="0.7"/>
<rect x="1287.37" y="413.50" width="3.9" height="13.00" fill="url(#hT)"/>
<rect x="1287.37" y="424.5" width="3.9" height="2.5" fill="url(#hD)" opacity="0.7"/>
<rect x="1294.83" y="391.10" width="3.9" height="35.40" fill="url(#hT)"/>
<rect x="1294.83" y="424.5" width="3.9" height="2.5" fill="url(#hD)" opacity="0.7"/>
<rect x="1302.29" y="375.30" width="3.9" height="51.20" fill="url(#hT)"/>
<rect x="1302.29" y="424.5" width="3.9" height="2.5" fill="url(#hD)" opacity="0.7"/>
<rect x="1309.75" y="413.00" width="3.9" height="13.50" fill="url(#hT)"/>
<rect x="1309.75" y="424.5" width="3.9" height="2.5" fill="url(#hD)" opacity="0.7"/>
<rect x="1317.22" y="414.90" width="3.9" height="11.60" fill="url(#hT)"/>
<rect x="1317.22" y="424.5" width="3.9" height="2.5" fill="url(#hD)" opacity="0.7"/>
<rect x="1324.68" y="424.20" width="3.9" height="2.30" fill="url(#hT)"/>
<rect x="1324.68" y="424.5" width="3.9" height="2.5" fill="url(#hD)" opacity="0.7"/>
<rect x="1332.14" y="426.5" width="3.9" height="7.90" fill="url(#hT)"/>
<rect x="1332.14" y="424.5" width="3.9" height="2.5" fill="url(#hD)" opacity="0.7"/>
<rect x="1339.61" y="417.20" width="3.9" height="9.30" fill="url(#hT)"/>
<rect x="1339.61" y="424.5" width="3.9" height="2.5" fill="url(#hD)" opacity="0.7"/>
<rect x="1347.07" y="390.20" width="3.9" height="36.30" fill="url(#hT)"/>
<rect x="1347.07" y="424.5" width="3.9" height="2.5" fill="url(#hD)" opacity="0.7"/>
<rect x="1354.53" y="426.5" width="3.9" height="13.00" fill="url(#hT)"/>
<rect x="1354.53" y="424.5" width="3.9" height="2.5" fill="url(#hD)" opacity="0.7"/>
<rect x="1361.99" y="425.50" width="3.9" height="1.00" fill="url(#hT)"/>
<rect x="1361.99" y="424.5" width="3.9" height="2.5" fill="url(#hD)" opacity="0.7"/>
<rect x="1369.46" y="426.5" width="3.9" height="2.30" fill="url(#hT)"/>
<rect x="1369.46" y="424.5" width="3.9" height="2.5" fill="url(#hD)" opacity="0.7"/>
<rect x="1376.92" y="409.70" width="3.9" height="16.80" fill="url(#hT)"/>
<rect x="1376.92" y="424.5" width="3.9" height="2.5" fill="url(#hD)" opacity="0.7"/>
<rect x="1384.38" y="379.50" width="3.9" height="47.00" fill="url(#hT)"/>
<rect x="1384.38" y="424.5" width="3.9" height="2.5" fill="url(#hD)" opacity="0.7"/>
<rect x="1391.85" y="360.30" width="3.9" height="66.20" fill="url(#hT)"/>
<rect x="1391.85" y="424.5" width="3.9" height="2.5" fill="url(#hD)" opacity="0.7"/>
<rect x="1399.31" y="407.90" width="3.9" height="18.60" fill="url(#hT)"/>
<rect x="1399.31" y="424.5" width="3.9" height="2.5" fill="url(#hD)" opacity="0.7"/>
<rect x="1406.77" y="406.50" width="3.9" height="20.00" fill="url(#hT)"/>
<rect x="1406.77" y="424.5" width="3.9" height="2.5" fill="url(#hD)" opacity="0.7"/>
<rect x="1414.24" y="421.40" width="3.9" height="5.10" fill="url(#hT)"/>
<rect x="1414.24" y="424.5" width="3.9" height="2.5" fill="url(#hD)" opacity="0.7"/>
<rect x="1421.70" y="426.5" width="3.9" height="9.20" fill="url(#hT)"/>
<rect x="1421.70" y="424.5" width="3.9" height="2.5" fill="url(#hD)" opacity="0.7"/>
<rect x="1429.16" y="411.80" width="3.9" height="14.70" fill="url(#hT)"/>
<rect x="1429.16" y="424.5" width="3.9" height="2.5" fill="url(#hD)" opacity="0.7"/>
<rect x="1436.62" y="380.00" width="3.9" height="46.50" fill="url(#hT)"/>
<rect x="1436.62" y="424.5" width="3.9" height="2.5" fill="url(#hD)" opacity="0.7"/>
<rect x="1444.09" y="426.5" width="3.9" height="16.00" fill="url(#hT)"/>
<rect x="1444.09" y="424.5" width="3.9" height="2.5" fill="url(#hD)" opacity="0.7"/>
<rect x="1451.55" y="426.5" width="3.9" height="4.20" fill="url(#hT)"/>
<rect x="1451.55" y="424.5" width="3.9" height="2.5" fill="url(#hD)" opacity="0.7"/>
<rect x="1459.01" y="426.5" width="3.9" height="5.60" fill="url(#hT)"/>
<rect x="1459.01" y="424.5" width="3.9" height="2.5" fill="url(#hD)" opacity="0.7"/>
<rect x="1466.48" y="403.50" width="3.9" height="23.00" fill="url(#hT)"/>
<rect x="1466.48" y="424.5" width="3.9" height="2.5" fill="url(#hD)" opacity="0.7"/>
<rect x="1473.94" y="367.10" width="3.9" height="59.40" fill="url(#hT)"/>
<rect x="1473.94" y="424.5" width="3.9" height="2.5" fill="url(#hD)" opacity="0.7"/>
<rect x="1481.40" y="345.00" width="3.9" height="81.50" fill="url(#hT)"/>
<rect x="1481.40" y="424.5" width="3.9" height="2.5" fill="url(#hD)" opacity="0.7"/>
<rect x="1488.87" y="404.10" width="3.9" height="22.40" fill="url(#hT)"/>
<rect x="1488.87" y="424.5" width="3.9" height="2.5" fill="url(#hD)" opacity="0.7"/>
<rect x="1496.33" y="399.20" width="3.9" height="27.30" fill="url(#hT)"/>
<rect x="1496.33" y="424.5" width="3.9" height="2.5" fill="url(#hD)" opacity="0.7"/>
<rect x="1503.79" y="419.50" width="3.9" height="7.00" fill="url(#hT)"/>
<rect x="1503.79" y="424.5" width="3.9" height="2.5" fill="url(#hD)" opacity="0.7"/>
<rect x="1511.25" y="426.5" width="3.9" height="11.20" fill="url(#hT)"/>
<rect x="1511.25" y="424.5" width="3.9" height="2.5" fill="url(#hD)" opacity="0.7"/>
<rect x="1518.72" y="409.00" width="3.9" height="17.50" fill="url(#hT)"/>
<rect x="1518.72" y="424.5" width="3.9" height="2.5" fill="url(#hD)" opacity="0.7"/>
<rect x="1526.18" y="371.00" width="3.9" height="55.50" fill="url(#hT)"/>
<rect x="1526.18" y="424.5" width="3.9" height="2.5" fill="url(#hD)" opacity="0.7"/>
<rect x="1533.64" y="426.5" width="3.9" height="18.20" fill="url(#hT)"/>
<rect x="1533.64" y="424.5" width="3.9" height="2.5" fill="url(#hD)" opacity="0.7"/>
<rect x="1541.11" y="426.5" width="3.9" height="4.20" fill="url(#hT)"/>
<rect x="1541.11" y="424.5" width="3.9" height="2.5" fill="url(#hD)" opacity="0.7"/>
<rect x="1548.57" y="426.5" width="3.9" height="6.30" fill="url(#hT)"/>
<rect x="1548.57" y="424.5" width="3.9" height="2.5" fill="url(#hD)" opacity="0.7"/>
<rect x="1556.03" y="399.90" width="3.9" height="26.60" fill="url(#hT)"/>
<rect x="1556.03" y="424.5" width="3.9" height="2.5" fill="url(#hD)" opacity="0.7"/>
<rect x="1563.50" y="356.60" width="3.9" height="69.90" fill="url(#hT)"/>
<rect x="1563.50" y="424.5" width="3.9" height="2.5" fill="url(#hD)" opacity="0.7"/>
<rect x="1570.96" y="328.70" width="3.9" height="97.80" fill="url(#hT)"/>
<rect x="1570.96" y="424.5" width="3.9" height="2.5" fill="url(#hD)" opacity="0.7"/>
<rect x="1578.42" y="398.50" width="3.9" height="28.00" fill="url(#hT)"/>
<rect x="1578.42" y="424.5" width="3.9" height="2.5" fill="url(#hD)" opacity="0.7"/>
<rect x="1585.88" y="389.50" width="3.9" height="37.00" fill="url(#hT)"/>
<rect x="1585.88" y="424.5" width="3.9" height="2.5" fill="url(#hD)" opacity="0.7"/>
<rect x="1593.35" y="418.80" width="3.9" height="7.70" fill="url(#hT)"/>
<rect x="1593.35" y="424.5" width="3.9" height="2.5" fill="url(#hD)" opacity="0.7"/>
<rect x="1600.81" y="426.5" width="3.9" height="14.00" fill="url(#hT)"/>
<rect x="1600.81" y="424.5" width="3.9" height="2.5" fill="url(#hD)" opacity="0.7"/>
<rect x="1608.27" y="406.30" width="3.9" height="20.20" fill="url(#hT)"/>
<rect x="1608.27" y="424.5" width="3.9" height="2.5" fill="url(#hD)" opacity="0.7"/>
<rect x="1615.74" y="360.20" width="3.9" height="66.30" fill="url(#hT)"/>
<rect x="1615.74" y="424.5" width="3.9" height="2.5" fill="url(#hD)" opacity="0.7"/>
<rect x="1623.20" y="426.5" width="3.9" height="22.50" fill="url(#hT)"/>
<rect x="1623.20" y="424.5" width="3.9" height="2.5" fill="url(#hD)" opacity="0.7"/>
<rect x="1630.66" y="424.20" width="3.9" height="2.30" fill="url(#hT)"/>
<rect x="1630.66" y="424.5" width="3.9" height="2.5" fill="url(#hD)" opacity="0.7"/>
<rect x="1638.13" y="426.5" width="3.9" height="7.00" fill="url(#hT)"/>
<rect x="1638.13" y="424.5" width="3.9" height="2.5" fill="url(#hD)" opacity="0.7"/>
<rect x="1645.59" y="395.50" width="3.9" height="31.00" fill="url(#hT)"/>
<rect x="1645.59" y="424.5" width="3.9" height="2.5" fill="url(#hD)" opacity="0.7"/>
<rect x="1653.05" y="341.90" width="3.9" height="84.60" fill="url(#hT)"/>
<rect x="1653.05" y="424.5" width="3.9" height="2.5" fill="url(#hD)" opacity="0.7"/>
<rect x="1660.52" y="311.60" width="3.9" height="114.90" fill="url(#hT)"/>
<rect x="1660.52" y="424.5" width="3.9" height="2.5" fill="url(#hD)" opacity="0.7"/>
<rect x="1667.98" y="393.90" width="3.9" height="32.60" fill="url(#hT)"/>
<rect x="1667.98" y="424.5" width="3.9" height="2.5" fill="url(#hD)" opacity="0.7"/>
<rect x="1675.44" y="372.90" width="3.9" height="53.60" fill="url(#hT)"/>
<rect x="1675.44" y="424.5" width="3.9" height="2.5" fill="url(#hD)" opacity="0.7"/>
<rect x="1682.90" y="416.50" width="3.9" height="10.00" fill="url(#hT)"/>
<rect x="1682.90" y="424.5" width="3.9" height="2.5" fill="url(#hD)" opacity="0.7"/>
<rect x="1690.37" y="426.5" width="3.9" height="19.40" fill="url(#hT)"/>
<rect x="1690.37" y="424.5" width="3.9" height="2.5" fill="url(#hD)" opacity="0.7"/>
<rect x="1697.83" y="404.00" width="3.9" height="22.50" fill="url(#hT)"/>
<rect x="1697.83" y="424.5" width="3.9" height="2.5" fill="url(#hD)" opacity="0.7"/>
<rect x="1705.29" y="348.10" width="3.9" height="78.40" fill="url(#hT)"/>
<rect x="1705.29" y="424.5" width="3.9" height="2.5" fill="url(#hD)" opacity="0.7"/>
<rect x="1712.76" y="426.5" width="3.9" height="25.60" fill="url(#hT)"/>
<rect x="1712.76" y="424.5" width="3.9" height="2.5" fill="url(#hD)" opacity="0.7"/>
<rect x="1720.22" y="423.50" width="3.9" height="3.00" fill="url(#hT)"/>
<rect x="1720.22" y="424.5" width="3.9" height="2.5" fill="url(#hD)" opacity="0.7"/>
<rect x="1727.68" y="426.5" width="3.9" height="8.50" fill="url(#hT)"/>
<rect x="1727.68" y="424.5" width="3.9" height="2.5" fill="url(#hD)" opacity="0.7"/>
<rect x="1735.14" y="389.20" width="3.9" height="37.30" fill="url(#hT)"/>
<rect x="1735.14" y="424.5" width="3.9" height="2.5" fill="url(#hD)" opacity="0.7"/>
<rect x="1742.61" y="326.50" width="3.9" height="100.00" fill="url(#hT)"/>
<rect x="1742.61" y="424.5" width="3.9" height="2.5" fill="url(#hD)" opacity="0.7"/>
<rect x="1750.07" y="288.30" width="3.9" height="138.20" fill="url(#hT)"/>
<rect x="1750.07" y="424.5" width="3.9" height="2.5" fill="url(#hD)" opacity="0.7"/>
<rect x="1757.53" y="386.90" width="3.9" height="39.60" fill="url(#hT)"/>
<rect x="1757.53" y="424.5" width="3.9" height="2.5" fill="url(#hD)" opacity="0.7"/>
<rect x="1765.00" y="344.70" width="3.9" height="81.80" fill="url(#hT)"/>
<rect x="1765.00" y="424.5" width="3.9" height="2.5" fill="url(#hD)" opacity="0.7"/>
<rect x="1772.46" y="415.60" width="3.9" height="10.90" fill="url(#hT)"/>
<rect x="1772.46" y="424.5" width="3.9" height="2.5" fill="url(#hD)" opacity="0.7"/>
<rect x="1779.92" y="426.5" width="3.9" height="27.20" fill="url(#hT)"/>
<rect x="1779.92" y="424.5" width="3.9" height="2.5" fill="url(#hD)" opacity="0.7"/>
<rect x="1787.39" y="400.10" width="3.9" height="26.40" fill="url(#hT)"/>
<rect x="1787.39" y="424.5" width="3.9" height="2.5" fill="url(#hD)" opacity="0.7"/>
<rect x="1794.85" y="333.30" width="3.9" height="93.20" fill="url(#hT)"/>
<rect x="1794.85" y="424.5" width="3.9" height="2.5" fill="url(#hD)" opacity="0.7"/>
<rect x="1802.31" y="426.5" width="3.9" height="30.30" fill="url(#hT)"/>
<rect x="1802.31" y="424.5" width="3.9" height="2.5" fill="url(#hD)" opacity="0.7"/>
<line x1="1944" y1="264.4" x2="2503" y2="264.4" stroke="#e6e6e6" stroke-width="1"/>
<text x="1929" y="268.7" text-anchor="end" style="font-family:'Liberation Sans',sans-serif;font-size:12px;fill:#333">2,000,000</text>
<line x1="1944" y1="336.5" x2="2503" y2="336.5" stroke="#e6e6e6" stroke-width="1"/>
<text x="1929" y="340.8" text-anchor="end" style="font-family:'Liberation Sans',sans-serif;font-size:12px;fill:#333">0</text>
<line x1="1944" y1="408.5" x2="2503" y2="408.5" stroke="#e6e6e6" stroke-width="1"/>
<text x="1929" y="412.8" text-anchor="end" style="font-family:'Liberation Sans',sans-serif;font-size:12px;fill:#333">(2,000,000)</text>
<text x="1929" y="485.3" text-anchor="end" style="font-family:'Liberation Sans',sans-serif;font-size:12px;fill:#333">(4,000,000)</text>
<line x1="1944" y1="481.5" x2="2503" y2="481.5" stroke="#1a1a1a" stroke-width="1.1"/>
<line x1="1967.5" y1="481" x2="1967.5" y2="490" stroke="#1a1a1a" stroke-width="1"/>
<text x="1967.2" y="507" text-anchor="middle" style="font-family:'Liberation Sans',sans-serif;font-size:12px;fill:#333">Jan '25</text>
<line x1="2044.5" y1="481" x2="2044.5" y2="490" stroke="#1a1a1a" stroke-width="1"/>
<text x="2044.25" y="507" text-anchor="middle" style="font-family:'Liberation Sans',sans-serif;font-size:12px;fill:#333">Jan '26</text>
<line x1="2121.5" y1="481" x2="2121.5" y2="490" stroke="#1a1a1a" stroke-width="1"/>
<text x="2121.3" y="507" text-anchor="middle" style="font-family:'Liberation Sans',sans-serif;font-size:12px;fill:#333">Jan '27</text>
<line x1="2198.5" y1="481" x2="2198.5" y2="490" stroke="#1a1a1a" stroke-width="1"/>
<text x="2198.35" y="507" text-anchor="middle" style="font-family:'Liberation Sans',sans-serif;font-size:12px;fill:#333">Jan '28</text>
<line x1="2275.5" y1="481" x2="2275.5" y2="490" stroke="#1a1a1a" stroke-width="1"/>
<text x="2275.4" y="507" text-anchor="middle" style="font-family:'Liberation Sans',sans-serif;font-size:12px;fill:#333">Jan '29</text>
<line x1="2352.5" y1="481" x2="2352.5" y2="490" stroke="#1a1a1a" stroke-width="1"/>
<text x="2352.45" y="507" text-anchor="middle" style="font-family:'Liberation Sans',sans-serif;font-size:12px;fill:#333">Jan '30</text>
<line x1="2429.5" y1="481" x2="2429.5" y2="490" stroke="#1a1a1a" stroke-width="1"/>
<text x="2429.5" y="507" text-anchor="middle" style="font-family:'Liberation Sans',sans-serif;font-size:12px;fill:#333">Jan '31</text>
<rect x="1944" y="525.5" width="559" height="10" rx="5" fill="#cacaca"/>
<rect x="2029.71" y="336.50" width="3.4" height="0.60" fill="url(#gB)"/>
<rect x="2036.13" y="336.50" width="3.4" height="1.00" fill="url(#gB)"/>
<rect x="2042.55" y="336.50" width="3.4" height="1.30" fill="url(#gB)"/>
<rect x="2048.97" y="336.50" width="3.4" height="1.70" fill="url(#gB)"/>
<rect x="2055.39" y="336.50" width="3.4" height="2.20" fill="url(#gB)"/>
<rect x="2061.82" y="336.50" width="3.4" height="3.00" fill="url(#gB)"/>
<rect x="2068.24" y="336.50" width="3.4" height="3.80" fill="url(#gB)"/>
<rect x="2074.66" y="336.50" width="3.4" height="5.50" fill="url(#gB)"/>
<rect x="2074.66" y="335.50" width="3.4" height="1.00" fill="#0f5b47"/>
<rect x="2081.08" y="336.50" width="3.4" height="7.20" fill="url(#gB)"/>
<rect x="2087.50" y="336.50" width="3.4" height="8.00" fill="url(#gB)"/>
<rect x="2087.50" y="335.70" width="3.4" height="0.80" fill="#0f5b47"/>
<rect x="2093.92" y="336.50" width="3.4" height="10.20" fill="url(#gB)"/>
<rect x="2093.92" y="334.80" width="3.4" height="1.70" fill="#0f5b47"/>
<rect x="2100.34" y="336.50" width="3.4" height="11.40" fill="url(#gB)"/>
<rect x="2100.34" y="334.50" width="3.4" height="2.00" fill="#0f5b47"/>
<rect x="2106.76" y="336.50" width="3.4" height="13.50" fill="url(#gB)"/>
<rect x="2106.76" y="332.80" width="3.4" height="1.70" fill="#72bba6"/>
<rect x="2106.76" y="332.80" width="3.4" height="0.59" fill="#5ea894"/>
<rect x="2106.76" y="334.50" width="3.4" height="2.00" fill="#0f5b47"/>
<rect x="2113.18" y="336.50" width="3.4" height="14.70" fill="url(#gB)"/>
<rect x="2113.18" y="331.70" width="3.4" height="0.30" fill="#72bba6"/>
<rect x="2113.18" y="331.70" width="3.4" height="0.10" fill="#5ea894"/>
<rect x="2113.18" y="332.00" width="3.4" height="4.50" fill="#0f5b47"/>
<rect x="2119.60" y="336.50" width="3.4" height="15.50" fill="url(#gB)"/>
<rect x="2119.60" y="330.00" width="3.4" height="0.30" fill="#72bba6"/>
<rect x="2119.60" y="330.00" width="3.4" height="0.10" fill="#5ea894"/>
<rect x="2119.60" y="330.30" width="3.4" height="6.20" fill="#0f5b47"/>
<rect x="2126.03" y="336.50" width="3.4" height="18.00" fill="url(#gB)"/>
<rect x="2126.03" y="327.80" width="3.4" height="0.90" fill="#72bba6"/>
<rect x="2126.03" y="327.80" width="3.4" height="0.31" fill="#5ea894"/>
<rect x="2126.03" y="328.70" width="3.4" height="7.80" fill="#0f5b47"/>
<rect x="2132.45" y="336.50" width="3.4" height="18.90" fill="url(#gB)"/>
<rect x="2132.45" y="327.00" width="3.4" height="0.80" fill="#72bba6"/>
<rect x="2132.45" y="327.00" width="3.4" height="0.28" fill="#5ea894"/>
<rect x="2132.45" y="327.80" width="3.4" height="8.70" fill="#0f5b47"/>
<rect x="2138.87" y="336.50" width="3.4" height="20.70" fill="url(#gB)"/>
<rect x="2138.87" y="324.50" width="3.4" height="1.20" fill="#72bba6"/>
<rect x="2138.87" y="324.50" width="3.4" height="0.42" fill="#5ea894"/>
<rect x="2138.87" y="325.70" width="3.4" height="10.80" fill="#0f5b47"/>
<rect x="2145.29" y="336.50" width="3.4" height="23.20" fill="url(#gB)"/>
<rect x="2145.29" y="322.80" width="3.4" height="3.40" fill="#72bba6"/>
<rect x="2145.29" y="322.80" width="3.4" height="1.19" fill="#5ea894"/>
<rect x="2145.29" y="326.20" width="3.4" height="10.30" fill="#0f5b47"/>
<rect x="2151.71" y="336.50" width="3.4" height="24.90" fill="url(#gB)"/>
<rect x="2151.71" y="321.60" width="3.4" height="4.60" fill="#72bba6"/>
<rect x="2151.71" y="321.60" width="3.4" height="1.61" fill="#5ea894"/>
<rect x="2151.71" y="326.20" width="3.4" height="10.30" fill="#0f5b47"/>
<rect x="2158.13" y="336.50" width="3.4" height="25.70" fill="url(#gB)"/>
<rect x="2158.13" y="318.60" width="3.4" height="6.70" fill="#72bba6"/>
<rect x="2158.13" y="318.60" width="3.4" height="2.34" fill="#5ea894"/>
<rect x="2158.13" y="325.30" width="3.4" height="11.20" fill="#0f5b47"/>
<rect x="2164.55" y="336.50" width="3.4" height="28.20" fill="url(#gB)"/>
<rect x="2164.55" y="314.50" width="3.4" height="8.80" fill="#72bba6"/>
<rect x="2164.55" y="314.50" width="3.4" height="3.08" fill="#5ea894"/>
<rect x="2164.55" y="323.30" width="3.4" height="13.20" fill="#0f5b47"/>
<rect x="2170.97" y="336.50" width="3.4" height="29.00" fill="url(#gB)"/>
<rect x="2170.97" y="313.60" width="3.4" height="9.70" fill="#72bba6"/>
<rect x="2170.97" y="313.60" width="3.4" height="3.39" fill="#5ea894"/>
<rect x="2170.97" y="323.30" width="3.4" height="13.20" fill="#0f5b47"/>
<rect x="2177.39" y="336.50" width="3.4" height="33.20" fill="url(#gB)"/>
<rect x="2177.39" y="309.50" width="3.4" height="12.80" fill="#72bba6"/>
<rect x="2177.39" y="309.50" width="3.4" height="4.48" fill="#5ea894"/>
<rect x="2177.39" y="322.30" width="3.4" height="14.20" fill="#0f5b47"/>
<rect x="2183.81" y="336.50" width="3.4" height="34.00" fill="url(#gB)"/>
<rect x="2183.81" y="306.60" width="3.4" height="13.70" fill="#72bba6"/>
<rect x="2183.81" y="306.60" width="3.4" height="4.79" fill="#5ea894"/>
<rect x="2183.81" y="320.30" width="3.4" height="16.20" fill="#0f5b47"/>
<rect x="2190.24" y="336.50" width="3.4" height="34.00" fill="url(#gB)"/>
<rect x="2190.24" y="304.50" width="3.4" height="15.80" fill="#72bba6"/>
<rect x="2190.24" y="304.50" width="3.4" height="5.53" fill="#5ea894"/>
<rect x="2190.24" y="320.30" width="3.4" height="16.20" fill="#0f5b47"/>
<rect x="2196.66" y="336.50" width="3.4" height="36.50" fill="url(#gB)"/>
<rect x="2196.66" y="301.60" width="3.4" height="16.70" fill="#72bba6"/>
<rect x="2196.66" y="301.60" width="3.4" height="5.84" fill="#5ea894"/>
<rect x="2196.66" y="318.30" width="3.4" height="18.20" fill="#0f5b47"/>
<rect x="2203.08" y="336.50" width="3.4" height="38.20" fill="url(#gB)"/>
<rect x="2203.08" y="297.80" width="3.4" height="19.50" fill="#72bba6"/>
<rect x="2203.08" y="297.80" width="3.4" height="6.83" fill="#5ea894"/>
<rect x="2203.08" y="317.30" width="3.4" height="19.20" fill="#0f5b47"/>
<rect x="2209.50" y="336.50" width="3.4" height="38.70" fill="url(#gB)"/>
<rect x="2209.50" y="296.60" width="3.4" height="20.70" fill="#72bba6"/>
<rect x="2209.50" y="296.60" width="3.4" height="7.24" fill="#5ea894"/>
<rect x="2209.50" y="317.30" width="3.4" height="19.20" fill="#0f5b47"/>
<rect x="2215.92" y="336.50" width="3.4" height="40.70" fill="url(#gB)"/>
<rect x="2215.92" y="292.80" width="3.4" height="22.50" fill="#72bba6"/>
<rect x="2215.92" y="292.80" width="3.4" height="7.88" fill="#5ea894"/>
<rect x="2215.92" y="315.30" width="3.4" height="21.20" fill="#0f5b47"/>
<rect x="2222.34" y="336.50" width="3.4" height="43.10" fill="url(#gB)"/>
<rect x="2222.34" y="288.60" width="3.4" height="25.50" fill="#72bba6"/>
<rect x="2222.34" y="288.60" width="3.4" height="10.00" fill="#5ea894"/>
<rect x="2222.34" y="314.10" width="3.4" height="22.40" fill="#0f5b47"/>
<rect x="2228.76" y="336.50" width="3.4" height="43.60" fill="url(#gB)"/>
<rect x="2228.76" y="287.40" width="3.4" height="26.70" fill="#72bba6"/>
<rect x="2228.76" y="287.40" width="3.4" height="10.00" fill="#5ea894"/>
<rect x="2228.76" y="314.10" width="3.4" height="22.40" fill="#0f5b47"/>
<rect x="2235.18" y="336.50" width="3.4" height="45.60" fill="url(#gB)"/>
<rect x="2235.18" y="283.60" width="3.4" height="28.70" fill="#72bba6"/>
<rect x="2235.18" y="283.60" width="3.4" height="10.00" fill="#5ea894"/>
<rect x="2235.18" y="312.30" width="3.4" height="24.20" fill="#0f5b47"/>
<rect x="2241.60" y="336.50" width="3.4" height="47.60" fill="url(#gB)"/>
<rect x="2241.60" y="280.60" width="3.4" height="30.90" fill="#72bba6"/>
<rect x="2241.60" y="280.60" width="3.4" height="10.00" fill="#5ea894"/>
<rect x="2241.60" y="311.50" width="3.4" height="25.00" fill="#0f5b47"/>
<rect x="2248.02" y="336.50" width="3.4" height="49.00" fill="url(#gB)"/>
<rect x="2248.02" y="278.60" width="3.4" height="31.70" fill="#72bba6"/>
<rect x="2248.02" y="278.60" width="3.4" height="10.00" fill="#5ea894"/>
<rect x="2248.02" y="310.30" width="3.4" height="26.20" fill="#0f5b47"/>
<rect x="2254.45" y="336.50" width="3.4" height="51.00" fill="url(#gB)"/>
<rect x="2254.45" y="274.40" width="3.4" height="35.10" fill="#72bba6"/>
<rect x="2254.45" y="274.40" width="3.4" height="10.00" fill="#5ea894"/>
<rect x="2254.45" y="309.50" width="3.4" height="27.00" fill="#0f5b47"/>
<rect x="2260.87" y="336.50" width="3.4" height="52.60" fill="url(#gB)"/>
<rect x="2260.87" y="271.60" width="3.4" height="36.70" fill="#72bba6"/>
<rect x="2260.87" y="271.60" width="3.4" height="10.00" fill="#5ea894"/>
<rect x="2260.87" y="308.30" width="3.4" height="28.20" fill="#0f5b47"/>
<rect x="2267.29" y="336.50" width="3.4" height="55.40" fill="url(#gB)"/>
<rect x="2267.29" y="269.90" width="3.4" height="37.40" fill="#72bba6"/>
<rect x="2267.29" y="269.90" width="3.4" height="10.00" fill="#5ea894"/>
<rect x="2267.29" y="307.30" width="3.4" height="29.20" fill="#0f5b47"/>
<rect x="2273.71" y="336.50" width="3.4" height="56.40" fill="url(#gB)"/>
<rect x="2273.71" y="264.60" width="3.4" height="42.00" fill="#72bba6"/>
<rect x="2273.71" y="264.60" width="3.4" height="10.00" fill="#5ea894"/>
<rect x="2273.71" y="306.60" width="3.4" height="29.90" fill="#0f5b47"/>
<rect x="2280.13" y="336.50" width="3.4" height="57.30" fill="url(#gB)"/>
<rect x="2280.13" y="264.60" width="3.4" height="40.70" fill="#72bba6"/>
<rect x="2280.13" y="264.60" width="3.4" height="10.00" fill="#5ea894"/>
<rect x="2280.13" y="305.30" width="3.4" height="31.20" fill="#0f5b47"/>
<rect x="2286.55" y="336.50" width="3.4" height="60.60" fill="url(#gB)"/>
<rect x="2286.55" y="264.60" width="3.4" height="39.90" fill="#72bba6"/>
<rect x="2286.55" y="264.60" width="3.4" height="10.00" fill="#5ea894"/>
<rect x="2286.55" y="304.50" width="3.4" height="32.00" fill="#0f5b47"/>
<rect x="2292.97" y="336.50" width="3.4" height="62.00" fill="url(#gB)"/>
<rect x="2292.97" y="264.60" width="3.4" height="38.70" fill="#72bba6"/>
<rect x="2292.97" y="264.60" width="3.4" height="10.00" fill="#5ea894"/>
<rect x="2292.97" y="303.30" width="3.4" height="33.20" fill="#0f5b47"/>
<rect x="2299.39" y="336.50" width="3.4" height="63.10" fill="url(#gB)"/>
<rect x="2299.39" y="264.60" width="3.4" height="37.00" fill="#72bba6"/>
<rect x="2299.39" y="264.60" width="3.4" height="10.00" fill="#5ea894"/>
<rect x="2299.39" y="301.60" width="3.4" height="34.90" fill="#0f5b47"/>
<rect x="2305.81" y="336.50" width="3.4" height="65.30" fill="url(#gB)"/>
<rect x="2305.81" y="264.60" width="3.4" height="37.00" fill="#72bba6"/>
<rect x="2305.81" y="264.60" width="3.4" height="10.00" fill="#5ea894"/>
<rect x="2305.81" y="301.60" width="3.4" height="34.90" fill="#0f5b47"/>
<rect x="2312.23" y="336.50" width="3.4" height="66.40" fill="url(#gB)"/>
<rect x="2312.23" y="264.60" width="3.4" height="34.80" fill="#72bba6"/>
<rect x="2312.23" y="264.60" width="3.4" height="10.00" fill="#5ea894"/>
<rect x="2312.23" y="299.40" width="3.4" height="37.10" fill="#0f5b47"/>
<rect x="2318.66" y="336.50" width="3.4" height="70.60" fill="url(#gB)"/>
<rect x="2318.66" y="264.60" width="3.4" height="33.70" fill="#72bba6"/>
<rect x="2318.66" y="264.60" width="3.4" height="10.00" fill="#5ea894"/>
<rect x="2318.66" y="298.30" width="3.4" height="38.20" fill="#0f5b47"/>
<rect x="2325.08" y="336.50" width="3.4" height="71.40" fill="url(#gB)"/>
<rect x="2325.08" y="264.60" width="3.4" height="32.80" fill="#72bba6"/>
<rect x="2325.08" y="264.60" width="3.4" height="10.00" fill="#5ea894"/>
<rect x="2325.08" y="297.40" width="3.4" height="39.10" fill="#0f5b47"/>
<rect x="2331.50" y="336.50" width="3.4" height="72.30" fill="url(#gB)"/>
<rect x="2331.50" y="264.60" width="3.4" height="31.50" fill="#72bba6"/>
<rect x="2331.50" y="264.60" width="3.4" height="8.33" fill="#5ea894"/>
<rect x="2331.50" y="296.10" width="3.4" height="40.40" fill="#0f5b47"/>
<rect x="2337.92" y="336.50" width="3.4" height="73.90" fill="url(#gB)"/>
<rect x="2337.92" y="264.60" width="3.4" height="30.70" fill="#72bba6"/>
<rect x="2337.92" y="264.60" width="3.4" height="6.67" fill="#5ea894"/>
<rect x="2337.92" y="295.30" width="3.4" height="41.20" fill="#0f5b47"/>
<rect x="2344.34" y="336.50" width="3.4" height="75.60" fill="url(#gB)"/>
<rect x="2344.34" y="264.60" width="3.4" height="29.80" fill="#72bba6"/>
<rect x="2344.34" y="264.60" width="3.4" height="5.00" fill="#5ea894"/>
<rect x="2344.34" y="294.40" width="3.4" height="42.10" fill="#0f5b47"/>
<rect x="2350.76" y="336.50" width="3.4" height="77.30" fill="url(#gB)"/>
<rect x="2350.76" y="264.60" width="3.4" height="27.70" fill="#72bba6"/>
<rect x="2350.76" y="264.60" width="3.4" height="3.33" fill="#5ea894"/>
<rect x="2350.76" y="292.30" width="3.4" height="44.20" fill="#0f5b47"/>
<rect x="2357.18" y="336.50" width="3.4" height="79.80" fill="url(#gB)"/>
<rect x="2357.18" y="264.60" width="3.4" height="26.50" fill="#72bba6"/>
<rect x="2357.18" y="264.60" width="3.4" height="1.67" fill="#5ea894"/>
<rect x="2357.18" y="291.10" width="3.4" height="45.40" fill="#0f5b47"/>
<rect x="2363.60" y="336.50" width="3.4" height="81.40" fill="url(#gB)"/>
<rect x="2363.60" y="264.60" width="3.4" height="26.50" fill="#72bba6"/>
<rect x="2363.60" y="291.10" width="3.4" height="45.40" fill="#0f5b47"/>
<rect x="2370.02" y="336.50" width="3.4" height="83.10" fill="url(#gB)"/>
<rect x="2370.02" y="264.60" width="3.4" height="24.80" fill="#72bba6"/>
<rect x="2370.02" y="289.40" width="3.4" height="47.10" fill="#0f5b47"/>
<rect x="2376.44" y="336.50" width="3.4" height="84.80" fill="url(#gB)"/>
<rect x="2376.44" y="264.60" width="3.4" height="23.70" fill="#72bba6"/>
<rect x="2376.44" y="288.30" width="3.4" height="48.20" fill="#0f5b47"/>
<rect x="2382.87" y="336.50" width="3.4" height="87.30" fill="url(#gB)"/>
<rect x="2382.87" y="264.60" width="3.4" height="22.70" fill="#72bba6"/>
<rect x="2382.87" y="287.30" width="3.4" height="49.20" fill="#0f5b47"/>
<rect x="2389.29" y="336.50" width="3.4" height="89.00" fill="url(#gB)"/>
<rect x="2389.29" y="264.60" width="3.4" height="21.50" fill="#72bba6"/>
<rect x="2389.29" y="286.10" width="3.4" height="50.40" fill="#0f5b47"/>
<rect x="2395.71" y="336.50" width="3.4" height="90.60" fill="url(#gB)"/>
<rect x="2395.71" y="264.60" width="3.4" height="19.50" fill="#72bba6"/>
<rect x="2395.71" y="284.10" width="3.4" height="52.40" fill="#0f5b47"/>
<rect x="2402.13" y="336.50" width="3.4" height="92.60" fill="url(#gB)"/>
<rect x="2402.13" y="264.60" width="3.4" height="18.70" fill="#72bba6"/>
<rect x="2402.13" y="283.30" width="3.4" height="53.20" fill="#0f5b47"/>
<rect x="2408.55" y="336.50" width="3.4" height="95.60" fill="url(#gB)"/>
<rect x="2408.55" y="264.60" width="3.4" height="17.30" fill="#72bba6"/>
<rect x="2408.55" y="281.90" width="3.4" height="54.60" fill="#0f5b47"/>
<rect x="2414.97" y="336.50" width="3.4" height="97.30" fill="url(#gB)"/>
<rect x="2414.97" y="264.60" width="3.4" height="15.70" fill="#72bba6"/>
<rect x="2414.97" y="280.30" width="3.4" height="56.20" fill="#0f5b47"/>
<rect x="2421.39" y="336.50" width="3.4" height="99.00" fill="url(#gB)"/>
<rect x="2421.39" y="264.60" width="3.4" height="15.70" fill="#72bba6"/>
<rect x="2421.39" y="280.30" width="3.4" height="56.20" fill="#0f5b47"/>
<rect x="2427.81" y="336.50" width="3.4" height="100.60" fill="url(#gB)"/>
<rect x="2427.81" y="264.60" width="3.4" height="13.70" fill="#72bba6"/>
<rect x="2427.81" y="278.30" width="3.4" height="58.20" fill="#0f5b47"/>
<rect x="2434.23" y="336.50" width="3.4" height="103.20" fill="url(#gB)"/>
<rect x="2434.23" y="264.60" width="3.4" height="12.30" fill="#72bba6"/>
<rect x="2434.23" y="276.90" width="3.4" height="59.60" fill="#0f5b47"/>
<rect x="2440.65" y="336.50" width="3.4" height="104.90" fill="url(#gB)"/>
<rect x="2440.65" y="264.60" width="3.4" height="11.50" fill="#72bba6"/>
<rect x="2440.65" y="276.10" width="3.4" height="60.40" fill="#0f5b47"/>
<rect x="2447.08" y="336.50" width="3.4" height="106.50" fill="url(#gB)"/>
<rect x="2447.08" y="264.60" width="3.4" height="10.60" fill="#72bba6"/>
<rect x="2447.08" y="275.20" width="3.4" height="61.30" fill="#0f5b47"/>
<rect x="2453.50" y="336.50" width="3.4" height="107.40" fill="url(#gB)"/>
<rect x="2453.50" y="264.60" width="3.4" height="8.60" fill="#72bba6"/>
<rect x="2453.50" y="273.20" width="3.4" height="63.30" fill="#0f5b47"/>
<rect x="2459.92" y="336.50" width="3.4" height="109.90" fill="url(#gB)"/>
<rect x="2459.92" y="264.60" width="3.4" height="7.60" fill="#72bba6"/>
<rect x="2459.92" y="272.20" width="3.4" height="64.30" fill="#0f5b47"/>
<rect x="2466.34" y="336.50" width="3.4" height="112.10" fill="url(#gB)"/>
<rect x="2466.34" y="264.60" width="3.4" height="6.50" fill="#72bba6"/>
<rect x="2466.34" y="271.10" width="3.4" height="65.40" fill="#0f5b47"/>
<rect x="2472.76" y="336.50" width="3.4" height="114.10" fill="url(#gB)"/>
<rect x="2472.76" y="264.60" width="3.4" height="4.80" fill="#72bba6"/>
<rect x="2472.76" y="269.40" width="3.4" height="67.10" fill="#0f5b47"/>
<rect x="2479.18" y="336.50" width="3.4" height="115.80" fill="url(#gB)"/>
<rect x="2479.18" y="264.60" width="3.4" height="4.80" fill="#72bba6"/>
<rect x="2479.18" y="269.40" width="3.4" height="67.10" fill="#0f5b47"/>
<rect x="2485.60" y="336.50" width="3.4" height="117.80" fill="url(#gB)"/>
<rect x="2485.60" y="264.60" width="3.4" height="2.60" fill="#72bba6"/>
<rect x="2485.60" y="267.20" width="3.4" height="69.30" fill="#0f5b47"/>
<rect x="2492.02" y="336.50" width="3.4" height="119.10" fill="url(#gB)"/>
<rect x="2492.02" y="264.60" width="3.4" height="0.60" fill="#72bba6"/>
<rect x="2492.02" y="265.20" width="3.4" height="71.30" fill="#0f5b47"/>
<rect x="2498.44" y="336.50" width="3.4" height="121.60" fill="url(#gB)"/>
<rect x="2498.44" y="264.60" width="3.4" height="0.10" fill="#72bba6"/>
<rect x="2498.44" y="264.70" width="3.4" height="71.80" fill="#0f5b47"/>
<line x1="560" y1="740.2" x2="1112" y2="740.2" stroke="#e6e6e6" stroke-width="1"/>
<text x="544.5" y="744.5" text-anchor="end" style="font-family:'Liberation Sans',sans-serif;font-size:12px;fill:#333">40,000,000</text>
<line x1="560" y1="783.6" x2="1112" y2="783.6" stroke="#e6e6e6" stroke-width="1"/>
<text x="544.5" y="787.9" text-anchor="end" style="font-family:'Liberation Sans',sans-serif;font-size:12px;fill:#333">30,000,000</text>
<line x1="560" y1="826.8" x2="1112" y2="826.8" stroke="#e6e6e6" stroke-width="1"/>
<text x="544.5" y="831.0999999999999" text-anchor="end" style="font-family:'Liberation Sans',sans-serif;font-size:12px;fill:#333">20,000,000</text>
<line x1="560" y1="870.3" x2="1112" y2="870.3" stroke="#e6e6e6" stroke-width="1"/>
<text x="544.5" y="874.5999999999999" text-anchor="end" style="font-family:'Liberation Sans',sans-serif;font-size:12px;fill:#333">10,000,000</text>
<line x1="560" y1="913.5" x2="1112" y2="913.5" stroke="#e6e6e6" stroke-width="1"/>
<text x="544.5" y="917.8" text-anchor="end" style="font-family:'Liberation Sans',sans-serif;font-size:12px;fill:#333">0</text>
<text x="544.5" y="961.3" text-anchor="end" style="font-family:'Liberation Sans',sans-serif;font-size:12px;fill:#333">(10,000,000)</text>
<line x1="560" y1="957.5" x2="1112" y2="957.5" stroke="#1a1a1a" stroke-width="1.1"/>
<line x1="585.5" y1="957" x2="585.5" y2="966" stroke="#1a1a1a" stroke-width="1"/>
<text x="585.4" y="983" text-anchor="middle" style="font-family:'Liberation Sans',sans-serif;font-size:12px;fill:#333">Jan '26</text>
<line x1="674.5" y1="957" x2="674.5" y2="966" stroke="#1a1a1a" stroke-width="1"/>
<text x="674.04" y="983" text-anchor="middle" style="font-family:'Liberation Sans',sans-serif;font-size:12px;fill:#333">Jan '27</text>
<line x1="762.5" y1="957" x2="762.5" y2="966" stroke="#1a1a1a" stroke-width="1"/>
<text x="762.68" y="983" text-anchor="middle" style="font-family:'Liberation Sans',sans-serif;font-size:12px;fill:#333">Jan '28</text>
<line x1="851.5" y1="957" x2="851.5" y2="966" stroke="#1a1a1a" stroke-width="1"/>
<text x="851.3199999999999" y="983" text-anchor="middle" style="font-family:'Liberation Sans',sans-serif;font-size:12px;fill:#333">Jan '29</text>
<line x1="939.5" y1="957" x2="939.5" y2="966" stroke="#1a1a1a" stroke-width="1"/>
<text x="939.96" y="983" text-anchor="middle" style="font-family:'Liberation Sans',sans-serif;font-size:12px;fill:#333">Jan '30</text>
<line x1="1028.5" y1="957" x2="1028.5" y2="966" stroke="#1a1a1a" stroke-width="1"/>
<text x="1028.6" y="983" text-anchor="middle" style="font-family:'Liberation Sans',sans-serif;font-size:12px;fill:#333">Jan '31</text>
<rect x="560" y="1002" width="552" height="10" rx="5" fill="#cacaca"/>
<rect x="561.70" y="909.30" width="3.4" height="4.20" fill="url(#hC)"/>
<rect x="569.09" y="907.50" width="3.4" height="6.00" fill="url(#hC)"/>
<rect x="576.47" y="909.60" width="3.4" height="3.90" fill="url(#hC)"/>
<rect x="583.86" y="905.70" width="3.4" height="7.80" fill="url(#hC)"/>
<rect x="591.25" y="906.80" width="3.4" height="6.70" fill="url(#hC)"/>
<rect x="598.63" y="905.70" width="3.4" height="7.80" fill="url(#hC)"/>
<rect x="606.02" y="902.30" width="3.4" height="11.20" fill="url(#hC)"/>
<rect x="613.41" y="899.10" width="3.4" height="14.40" fill="url(#hC)"/>
<rect x="620.80" y="897.70" width="3.4" height="15.80" fill="url(#hC)"/>
<rect x="620.80" y="913.5" width="3.4" height="2.40" fill="url(#hC)" opacity="0.7"/>
<rect x="628.18" y="898.40" width="3.4" height="15.10" fill="url(#hC)"/>
<rect x="628.18" y="913.5" width="3.4" height="2.40" fill="url(#hC)" opacity="0.7"/>
<rect x="635.57" y="897.70" width="3.4" height="15.80" fill="url(#hC)"/>
<rect x="635.57" y="913.5" width="3.4" height="2.40" fill="url(#hC)" opacity="0.7"/>
<rect x="642.96" y="898.40" width="3.4" height="15.10" fill="url(#hC)"/>
<rect x="642.96" y="913.5" width="3.4" height="2.40" fill="url(#hC)" opacity="0.7"/>
<rect x="650.34" y="897.70" width="3.4" height="15.80" fill="url(#hC)"/>
<rect x="650.34" y="913.5" width="3.4" height="2.40" fill="url(#hC)" opacity="0.7"/>
<rect x="657.73" y="894.90" width="3.4" height="18.60" fill="url(#hC)"/>
<rect x="657.73" y="913.5" width="3.4" height="5.00" fill="url(#hC)" opacity="0.7"/>
<rect x="657.73" y="913.5" width="3.4" height="3" fill="url(#hR)" opacity="0.8"/>
<rect x="665.12" y="896.30" width="3.4" height="17.20" fill="url(#hC)"/>
<rect x="665.12" y="913.5" width="3.4" height="5.00" fill="url(#hC)" opacity="0.7"/>
<rect x="665.12" y="913.5" width="3.4" height="3" fill="url(#hR)" opacity="0.8"/>
<rect x="672.50" y="897.00" width="3.4" height="16.50" fill="url(#hC)"/>
<rect x="672.50" y="913.5" width="3.4" height="5.00" fill="url(#hC)" opacity="0.7"/>
<rect x="672.50" y="913.5" width="3.4" height="3" fill="url(#hR)" opacity="0.8"/>
<rect x="679.89" y="897.70" width="3.4" height="15.80" fill="url(#hC)"/>
<rect x="679.89" y="913.5" width="3.4" height="5.00" fill="url(#hC)" opacity="0.7"/>
<rect x="679.89" y="913.5" width="3.4" height="3" fill="url(#hR)" opacity="0.8"/>
<rect x="687.28" y="896.30" width="3.4" height="17.20" fill="url(#hC)"/>
<rect x="687.28" y="913.5" width="3.4" height="5.00" fill="url(#hC)" opacity="0.7"/>
<rect x="687.28" y="913.5" width="3.4" height="3" fill="url(#hR)" opacity="0.8"/>
<rect x="694.67" y="892.80" width="3.4" height="20.70" fill="url(#hC)"/>
<rect x="694.67" y="913.5" width="3.4" height="5.00" fill="url(#hC)" opacity="0.7"/>
<rect x="694.67" y="913.5" width="3.4" height="3" fill="url(#hR)" opacity="0.8"/>
<rect x="702.05" y="887.90" width="3.4" height="25.60" fill="url(#hC)"/>
<rect x="702.05" y="913.5" width="3.4" height="5.00" fill="url(#hC)" opacity="0.7"/>
<rect x="702.05" y="913.5" width="3.4" height="3" fill="url(#hR)" opacity="0.8"/>
<rect x="709.44" y="886.50" width="3.4" height="27.00" fill="url(#hC)"/>
<rect x="709.44" y="913.5" width="3.4" height="8.70" fill="url(#hC)" opacity="0.7"/>
<rect x="709.44" y="913.5" width="3.4" height="3" fill="url(#hR)" opacity="0.8"/>
<rect x="716.83" y="885.80" width="3.4" height="27.70" fill="url(#hC)"/>
<rect x="716.83" y="913.5" width="3.4" height="8.79" fill="url(#hC)" opacity="0.7"/>
<rect x="716.83" y="913.5" width="3.4" height="3" fill="url(#hR)" opacity="0.8"/>
<rect x="724.21" y="885.60" width="3.4" height="27.90" fill="url(#hC)"/>
<rect x="724.21" y="913.5" width="3.4" height="8.88" fill="url(#hC)" opacity="0.7"/>
<rect x="724.21" y="913.5" width="3.4" height="3" fill="url(#hR)" opacity="0.8"/>
<rect x="731.60" y="887.20" width="3.4" height="26.30" fill="url(#hC)"/>
<rect x="731.60" y="913.5" width="3.4" height="8.97" fill="url(#hC)" opacity="0.7"/>
<rect x="731.60" y="913.5" width="3.4" height="3" fill="url(#hR)" opacity="0.8"/>
<rect x="738.99" y="885.60" width="3.4" height="27.90" fill="url(#hC)"/>
<rect x="738.99" y="913.5" width="3.4" height="9.06" fill="url(#hC)" opacity="0.7"/>
<rect x="738.99" y="913.5" width="3.4" height="3" fill="url(#hR)" opacity="0.8"/>
<rect x="746.37" y="882.80" width="3.4" height="30.70" fill="url(#hC)"/>
<rect x="746.37" y="913.5" width="3.4" height="9.14" fill="url(#hC)" opacity="0.7"/>
<rect x="746.37" y="913.5" width="3.4" height="3" fill="url(#hR)" opacity="0.8"/>
<rect x="753.76" y="884.90" width="3.4" height="28.60" fill="url(#hC)"/>
<rect x="753.76" y="913.5" width="3.4" height="9.23" fill="url(#hC)" opacity="0.7"/>
<rect x="761.15" y="884.90" width="3.4" height="28.60" fill="url(#hC)"/>
<rect x="761.15" y="913.5" width="3.4" height="9.32" fill="url(#hC)" opacity="0.7"/>
<rect x="768.54" y="885.10" width="3.4" height="28.40" fill="url(#hC)"/>
<rect x="768.54" y="913.5" width="3.4" height="9.41" fill="url(#hC)" opacity="0.7"/>
<rect x="775.92" y="883.70" width="3.4" height="29.80" fill="url(#hC)"/>
<rect x="775.92" y="913.5" width="3.4" height="9.50" fill="url(#hC)" opacity="0.7"/>
<rect x="783.31" y="877.90" width="3.4" height="35.60" fill="url(#hC)"/>
<rect x="783.31" y="913.5" width="3.4" height="9.59" fill="url(#hC)" opacity="0.7"/>
<rect x="790.70" y="874.40" width="3.4" height="39.10" fill="url(#hC)"/>
<rect x="790.70" y="913.5" width="3.4" height="9.68" fill="url(#hC)" opacity="0.7"/>
<rect x="798.08" y="871.90" width="3.4" height="41.60" fill="url(#hC)"/>
<rect x="798.08" y="913.5" width="3.4" height="9.77" fill="url(#hC)" opacity="0.7"/>
<rect x="805.47" y="870.90" width="3.4" height="42.60" fill="url(#hC)"/>
<rect x="805.47" y="913.5" width="3.4" height="9.86" fill="url(#hC)" opacity="0.7"/>
<rect x="812.86" y="870.90" width="3.4" height="42.60" fill="url(#hC)"/>
<rect x="812.86" y="913.5" width="3.4" height="9.94" fill="url(#hC)" opacity="0.7"/>
<rect x="820.24" y="871.20" width="3.4" height="42.30" fill="url(#hC)"/>
<rect x="820.24" y="913.5" width="3.4" height="10.03" fill="url(#hC)" opacity="0.7"/>
<rect x="827.63" y="870.90" width="3.4" height="42.60" fill="url(#hC)"/>
<rect x="827.63" y="913.5" width="3.4" height="10.12" fill="url(#hC)" opacity="0.7"/>
<rect x="835.02" y="867.30" width="3.4" height="46.20" fill="url(#hC)"/>
<rect x="835.02" y="913.5" width="3.4" height="10.21" fill="url(#hC)" opacity="0.7"/>
<rect x="842.41" y="868.10" width="3.4" height="45.40" fill="url(#hC)"/>
<rect x="842.41" y="913.5" width="3.4" height="10.30" fill="url(#hC)" opacity="0.7"/>
<rect x="849.79" y="868.10" width="3.4" height="45.40" fill="url(#hC)"/>
<rect x="849.79" y="913.5" width="3.4" height="10.39" fill="url(#hC)" opacity="0.7"/>
<rect x="857.18" y="869.20" width="3.4" height="44.30" fill="url(#hC)"/>
<rect x="857.18" y="913.5" width="3.4" height="10.48" fill="url(#hC)" opacity="0.7"/>
<rect x="864.57" y="866.60" width="3.4" height="46.90" fill="url(#hC)"/>
<rect x="864.57" y="913.5" width="3.4" height="10.57" fill="url(#hC)" opacity="0.7"/>
<rect x="871.95" y="862.20" width="3.4" height="51.30" fill="url(#hC)"/>
<rect x="871.95" y="913.5" width="3.4" height="10.66" fill="url(#hC)" opacity="0.7"/>
<rect x="879.34" y="855.50" width="3.4" height="58.00" fill="url(#hC)"/>
<rect x="879.34" y="913.5" width="3.4" height="10.74" fill="url(#hC)" opacity="0.7"/>
<rect x="886.73" y="852.60" width="3.4" height="60.90" fill="url(#hC)"/>
<rect x="886.73" y="913.5" width="3.4" height="10.83" fill="url(#hC)" opacity="0.7"/>
<rect x="894.11" y="850.40" width="3.4" height="63.10" fill="url(#hC)"/>
<rect x="894.11" y="913.5" width="3.4" height="10.92" fill="url(#hC)" opacity="0.7"/>
<rect x="894.11" y="910.50" width="3.4" height="3" fill="url(#hD)"/>
<rect x="901.50" y="848.20" width="3.4" height="65.30" fill="url(#hC)"/>
<rect x="901.50" y="913.5" width="3.4" height="11.01" fill="url(#hC)" opacity="0.7"/>
<rect x="901.50" y="910.50" width="3.4" height="3" fill="url(#hD)"/>
<rect x="908.89" y="850.40" width="3.4" height="63.10" fill="url(#hC)"/>
<rect x="908.89" y="913.5" width="3.4" height="11.10" fill="url(#hC)" opacity="0.7"/>
<rect x="908.89" y="910.50" width="3.4" height="3" fill="url(#hD)"/>
<rect x="916.28" y="848.20" width="3.4" height="65.30" fill="url(#hC)"/>
<rect x="916.28" y="913.5" width="3.4" height="11.19" fill="url(#hC)" opacity="0.7"/>
<rect x="916.28" y="910.50" width="3.4" height="3" fill="url(#hD)"/>
<rect x="923.66" y="843.00" width="3.4" height="70.50" fill="url(#hC)"/>
<rect x="923.66" y="913.5" width="3.4" height="11.28" fill="url(#hC)" opacity="0.7"/>
<rect x="923.66" y="910.50" width="3.4" height="3" fill="url(#hD)"/>
<rect x="931.05" y="843.70" width="3.4" height="69.80" fill="url(#hC)"/>
<rect x="931.05" y="913.5" width="3.4" height="11.37" fill="url(#hC)" opacity="0.7"/>
<rect x="931.05" y="910.50" width="3.4" height="3" fill="url(#hD)"/>
<rect x="938.44" y="844.50" width="3.4" height="69.00" fill="url(#hC)"/>
<rect x="938.44" y="913.5" width="3.4" height="11.46" fill="url(#hC)" opacity="0.7"/>
<rect x="938.44" y="910.50" width="3.4" height="3" fill="url(#hD)"/>
<rect x="945.82" y="843.70" width="3.4" height="69.80" fill="url(#hC)"/>
<rect x="945.82" y="913.5" width="3.4" height="11.54" fill="url(#hC)" opacity="0.7"/>
<rect x="945.82" y="910.50" width="3.4" height="3" fill="url(#hD)"/>
<rect x="953.21" y="842.30" width="3.4" height="71.20" fill="url(#hC)"/>
<rect x="953.21" y="913.5" width="3.4" height="11.63" fill="url(#hC)" opacity="0.7"/>
<rect x="953.21" y="910.50" width="3.4" height="3" fill="url(#hD)"/>
<rect x="960.60" y="835.60" width="3.4" height="77.90" fill="url(#hC)"/>
<rect x="960.60" y="913.5" width="3.4" height="11.72" fill="url(#hC)" opacity="0.7"/>
<rect x="960.60" y="910.50" width="3.4" height="3" fill="url(#hD)"/>
<rect x="967.98" y="826.00" width="3.4" height="87.50" fill="url(#hC)"/>
<rect x="967.98" y="913.5" width="3.4" height="11.81" fill="url(#hC)" opacity="0.7"/>
<rect x="967.98" y="910.50" width="3.4" height="3" fill="url(#hD)"/>
<rect x="975.37" y="822.80" width="3.4" height="90.70" fill="url(#hC)"/>
<rect x="975.37" y="913.5" width="3.4" height="11.90" fill="url(#hC)" opacity="0.7"/>
<rect x="975.37" y="910.50" width="3.4" height="3" fill="url(#hD)"/>
<rect x="975.37" y="907.50" width="3.4" height="3.00" fill="url(#hR)" opacity="0.6"/>
<rect x="982.76" y="818.60" width="3.4" height="94.90" fill="url(#hC)"/>
<rect x="982.76" y="913.5" width="3.4" height="11.99" fill="url(#hC)" opacity="0.7"/>
<rect x="982.76" y="910.50" width="3.4" height="3" fill="url(#hD)"/>
<rect x="982.76" y="907.22" width="3.4" height="3.28" fill="url(#hR)" opacity="0.6"/>
<rect x="990.15" y="817.90" width="3.4" height="95.60" fill="url(#hC)"/>
<rect x="990.15" y="913.5" width="3.4" height="12.08" fill="url(#hC)" opacity="0.7"/>
<rect x="990.15" y="910.50" width="3.4" height="3" fill="url(#hD)"/>
<rect x="990.15" y="906.94" width="3.4" height="3.56" fill="url(#hR)" opacity="0.6"/>
<rect x="997.53" y="819.40" width="3.4" height="94.10" fill="url(#hC)"/>
<rect x="997.53" y="913.5" width="3.4" height="12.17" fill="url(#hC)" opacity="0.7"/>
<rect x="997.53" y="910.50" width="3.4" height="3" fill="url(#hD)"/>
<rect x="997.53" y="906.67" width="3.4" height="3.83" fill="url(#hR)" opacity="0.6"/>
<rect x="1004.92" y="817.90" width="3.4" height="95.60" fill="url(#hC)"/>
<rect x="1004.92" y="913.5" width="3.4" height="12.26" fill="url(#hC)" opacity="0.7"/>
<rect x="1004.92" y="910.50" width="3.4" height="3" fill="url(#hD)"/>
<rect x="1004.92" y="906.39" width="3.4" height="4.11" fill="url(#hR)" opacity="0.6"/>
<rect x="1012.31" y="812.70" width="3.4" height="100.80" fill="url(#hC)"/>
<rect x="1012.31" y="913.5" width="3.4" height="12.34" fill="url(#hC)" opacity="0.7"/>
<rect x="1012.31" y="910.50" width="3.4" height="3" fill="url(#hD)"/>
<rect x="1012.31" y="906.11" width="3.4" height="4.39" fill="url(#hR)" opacity="0.6"/>
<rect x="1019.69" y="813.50" width="3.4" height="100.00" fill="url(#hC)"/>
<rect x="1019.69" y="913.5" width="3.4" height="12.43" fill="url(#hC)" opacity="0.7"/>
<rect x="1019.69" y="910.50" width="3.4" height="3" fill="url(#hD)"/>
<rect x="1019.69" y="905.83" width="3.4" height="4.67" fill="url(#hR)" opacity="0.6"/>
<rect x="1027.08" y="813.50" width="3.4" height="100.00" fill="url(#hC)"/>
<rect x="1027.08" y="913.5" width="3.4" height="12.52" fill="url(#hC)" opacity="0.7"/>
<rect x="1027.08" y="910.50" width="3.4" height="3" fill="url(#hD)"/>
<rect x="1027.08" y="905.56" width="3.4" height="4.94" fill="url(#hR)" opacity="0.6"/>
<rect x="1034.47" y="812.70" width="3.4" height="100.80" fill="url(#hC)"/>
<rect x="1034.47" y="913.5" width="3.4" height="12.61" fill="url(#hC)" opacity="0.7"/>
<rect x="1034.47" y="910.50" width="3.4" height="3" fill="url(#hD)"/>
<rect x="1034.47" y="905.28" width="3.4" height="5.22" fill="url(#hR)" opacity="0.6"/>
<rect x="1041.85" y="810.20" width="3.4" height="103.30" fill="url(#hC)"/>
<rect x="1041.85" y="913.5" width="3.4" height="12.70" fill="url(#hC)" opacity="0.7"/>
<rect x="1041.85" y="910.50" width="3.4" height="3" fill="url(#hD)"/>
<rect x="1041.85" y="905.00" width="3.4" height="5.50" fill="url(#hR)" opacity="0.6"/>
<rect x="1049.24" y="801.70" width="3.4" height="111.80" fill="url(#hC)"/>
<rect x="1049.24" y="913.5" width="3.4" height="12.79" fill="url(#hC)" opacity="0.7"/>
<rect x="1049.24" y="910.50" width="3.4" height="3" fill="url(#hD)"/>
<rect x="1049.24" y="904.72" width="3.4" height="5.78" fill="url(#hR)" opacity="0.6"/>
<rect x="1056.63" y="792.10" width="3.4" height="121.40" fill="url(#hC)"/>
<rect x="1056.63" y="913.5" width="3.4" height="12.88" fill="url(#hC)" opacity="0.7"/>
<rect x="1056.63" y="910.50" width="3.4" height="3" fill="url(#hD)"/>
<rect x="1056.63" y="904.44" width="3.4" height="6.06" fill="url(#hR)" opacity="0.6"/>
<rect x="1064.02" y="788.70" width="3.4" height="124.80" fill="url(#hC)"/>
<rect x="1064.02" y="913.5" width="3.4" height="12.97" fill="url(#hC)" opacity="0.7"/>
<rect x="1064.02" y="910.50" width="3.4" height="3" fill="url(#hD)"/>
<rect x="1064.02" y="904.17" width="3.4" height="6.33" fill="url(#hR)" opacity="0.6"/>
<rect x="1071.40" y="781.80" width="3.4" height="131.70" fill="url(#hC)"/>
<rect x="1071.40" y="913.5" width="3.4" height="13.06" fill="url(#hC)" opacity="0.7"/>
<rect x="1071.40" y="910.50" width="3.4" height="3" fill="url(#hD)"/>
<rect x="1071.40" y="903.89" width="3.4" height="6.61" fill="url(#hR)" opacity="0.6"/>
<rect x="1078.79" y="780.00" width="3.4" height="133.50" fill="url(#hC)"/>
<rect x="1078.79" y="913.5" width="3.4" height="13.14" fill="url(#hC)" opacity="0.7"/>
<rect x="1078.79" y="910.50" width="3.4" height="3" fill="url(#hD)"/>
<rect x="1078.79" y="903.61" width="3.4" height="6.89" fill="url(#hR)" opacity="0.6"/>
<rect x="1086.18" y="781.80" width="3.4" height="131.70" fill="url(#hC)"/>
<rect x="1086.18" y="913.5" width="3.4" height="13.23" fill="url(#hC)" opacity="0.7"/>
<rect x="1086.18" y="910.50" width="3.4" height="3" fill="url(#hD)"/>
<rect x="1086.18" y="903.33" width="3.4" height="7.17" fill="url(#hR)" opacity="0.6"/>
<rect x="1093.56" y="780.30" width="3.4" height="133.20" fill="url(#hC)"/>
<rect x="1093.56" y="913.5" width="3.4" height="13.32" fill="url(#hC)" opacity="0.7"/>
<rect x="1093.56" y="910.50" width="3.4" height="3" fill="url(#hD)"/>
<rect x="1093.56" y="903.06" width="3.4" height="7.44" fill="url(#hR)" opacity="0.6"/>
<rect x="1100.95" y="772.20" width="3.4" height="141.30" fill="url(#hC)"/>
<rect x="1100.95" y="913.5" width="3.4" height="13.41" fill="url(#hC)" opacity="0.7"/>
<rect x="1100.95" y="910.50" width="3.4" height="3" fill="url(#hD)"/>
<rect x="1100.95" y="902.78" width="3.4" height="7.72" fill="url(#hR)" opacity="0.6"/>
<rect x="1108.34" y="774.40" width="3.4" height="139.10" fill="url(#hC)"/>
<rect x="1108.34" y="913.5" width="3.4" height="13.50" fill="url(#hC)" opacity="0.7"/>
<rect x="1108.34" y="910.50" width="3.4" height="3" fill="url(#hD)"/>
<rect x="1108.34" y="902.50" width="3.4" height="8.00" fill="url(#hR)" opacity="0.6"/>
<g clip-path="url(#lc)" transform="translate(557.5,571)"><line x1="-15.4" y1="-7" x2="-1.4000000000000004" y2="7" stroke="#3a9a84" stroke-width="1.7"/><line x1="-11.2" y1="-7" x2="2.8" y2="7" stroke="#3a9a84" stroke-width="1.7"/><line x1="-7.0" y1="-7" x2="7.0" y2="7" stroke="#3a9a84" stroke-width="1.7"/><line x1="-2.8" y1="-7" x2="11.2" y2="7" stroke="#3a9a84" stroke-width="1.7"/><line x1="1.4000000000000004" y1="-7" x2="15.4" y2="7" stroke="#3a9a84" stroke-width="1.7"/></g>
<text x="571.0" y="575.2" style="font-family:'Liberation Sans',sans-serif;font-size:11.9px;fill:#3a3a3a">Springfield Nuclear Power Plant</text>
<g clip-path="url(#lc)" transform="translate(557.5,589)"><line x1="-15.4" y1="-7" x2="-1.4000000000000004" y2="7" stroke="#d4d4d4" stroke-width="1.7"/><line x1="-11.2" y1="-7" x2="2.8" y2="7" stroke="#d4d4d4" stroke-width="1.7"/><line x1="-7.0" y1="-7" x2="7.0" y2="7" stroke="#d4d4d4" stroke-width="1.7"/><line x1="-2.8" y1="-7" x2="11.2" y2="7" stroke="#d4d4d4" stroke-width="1.7"/><line x1="1.4000000000000004" y1="-7" x2="15.4" y2="7" stroke="#d4d4d4" stroke-width="1.7"/></g>
<text x="571.0" y="593.2" style="font-family:'Liberation Sans',sans-serif;font-size:11.9px;fill:#3a3a3a">Plant Expansion</text>
<g clip-path="url(#lc)" transform="translate(557.5,607)"><line x1="-15.4" y1="-7" x2="-1.4000000000000004" y2="7" stroke="#d8d6b0" stroke-width="1.7"/><line x1="-11.2" y1="-7" x2="2.8" y2="7" stroke="#d8d6b0" stroke-width="1.7"/><line x1="-7.0" y1="-7" x2="7.0" y2="7" stroke="#d8d6b0" stroke-width="1.7"/><line x1="-2.8" y1="-7" x2="11.2" y2="7" stroke="#d8d6b0" stroke-width="1.7"/><line x1="1.4000000000000004" y1="-7" x2="15.4" y2="7" stroke="#d8d6b0" stroke-width="1.7"/></g>
<text x="571.0" y="611.2" style="font-family:'Liberation Sans',sans-serif;font-size:11.9px;fill:#3a3a3a">Springfield Waterfront</text>
<g clip-path="url(#lc)" transform="translate(557.5,625)"><line x1="-15.4" y1="-7" x2="-1.4000000000000004" y2="7" stroke="#a33a56" stroke-width="1.7"/><line x1="-11.2" y1="-7" x2="2.8" y2="7" stroke="#a33a56" stroke-width="1.7"/><line x1="-7.0" y1="-7" x2="7.0" y2="7" stroke="#a33a56" stroke-width="1.7"/><line x1="-2.8" y1="-7" x2="11.2" y2="7" stroke="#a33a56" stroke-width="1.7"/><line x1="1.4000000000000004" y1="-7" x2="15.4" y2="7" stroke="#a33a56" stroke-width="1.7"/></g>
<text x="571.0" y="629.2" style="font-family:'Liberation Sans',sans-serif;font-size:11.9px;fill:#3a3a3a">Downtown Springfield</text>
<circle cx="812.5" cy="571" r="5.2" fill="#3f957f"/>
<text x="826.0" y="575.2" style="font-family:'Liberation Sans',sans-serif;font-size:11.9px;fill:#3a3a3a">Springfield Nuclear Power Plant (Actual)</text>
<g clip-path="url(#lc)" transform="translate(812.5,589)"><line x1="-15.4" y1="-7" x2="-1.4000000000000004" y2="7" stroke="#d4d4d4" stroke-width="1.7"/><line x1="-11.2" y1="-7" x2="2.8" y2="7" stroke="#d4d4d4" stroke-width="1.7"/><line x1="-7.0" y1="-7" x2="7.0" y2="7" stroke="#d4d4d4" stroke-width="1.7"/><line x1="-2.8" y1="-7" x2="11.2" y2="7" stroke="#d4d4d4" stroke-width="1.7"/><line x1="1.4000000000000004" y1="-7" x2="15.4" y2="7" stroke="#d4d4d4" stroke-width="1.7"/></g>
<text x="826.0" y="593.2" style="font-family:'Liberation Sans',sans-serif;font-size:11.9px;fill:#3a3a3a">New People</text>
<g clip-path="url(#lc)" transform="translate(812.5,607)"><line x1="-15.4" y1="-7" x2="-1.4000000000000004" y2="7" stroke="#d4d4d4" stroke-width="1.7"/><line x1="-11.2" y1="-7" x2="2.8" y2="7" stroke="#d4d4d4" stroke-width="1.7"/><line x1="-7.0" y1="-7" x2="7.0" y2="7" stroke="#d4d4d4" stroke-width="1.7"/><line x1="-2.8" y1="-7" x2="11.2" y2="7" stroke="#d4d4d4" stroke-width="1.7"/><line x1="1.4000000000000004" y1="-7" x2="15.4" y2="7" stroke="#d4d4d4" stroke-width="1.7"/></g>
<text x="826.0" y="611.2" style="font-family:'Liberation Sans',sans-serif;font-size:11.9px;fill:#3a3a3a">Homer Simpson</text>
<g clip-path="url(#lc)" transform="translate(812.5,625)"><line x1="-15.4" y1="-7" x2="-1.4000000000000004" y2="7" stroke="#1f5c4d" stroke-width="1.7"/><line x1="-11.2" y1="-7" x2="2.8" y2="7" stroke="#1f5c4d" stroke-width="1.7"/><line x1="-7.0" y1="-7" x2="7.0" y2="7" stroke="#1f5c4d" stroke-width="1.7"/><line x1="-2.8" y1="-7" x2="11.2" y2="7" stroke="#1f5c4d" stroke-width="1.7"/><line x1="1.4000000000000004" y1="-7" x2="15.4" y2="7" stroke="#1f5c4d" stroke-width="1.7"/></g>
<text x="826.0" y="629.2" style="font-family:'Liberation Sans',sans-serif;font-size:11.9px;fill:#3a3a3a">Evergreen Terrace District</text>
<g clip-path="url(#lc)" transform="translate(1297.5,571)"><line x1="-15.4" y1="-7" x2="-1.4000000000000004" y2="7" stroke="#3a9a84" stroke-width="1.7"/><line x1="-11.2" y1="-7" x2="2.8" y2="7" stroke="#3a9a84" stroke-width="1.7"/><line x1="-7.0" y1="-7" x2="7.0" y2="7" stroke="#3a9a84" stroke-width="1.7"/><line x1="-2.8" y1="-7" x2="11.2" y2="7" stroke="#3a9a84" stroke-width="1.7"/><line x1="1.4000000000000004" y1="-7" x2="15.4" y2="7" stroke="#3a9a84" stroke-width="1.7"/></g>
<text x="1311.0" y="575.2" style="font-family:'Liberation Sans',sans-serif;font-size:11.9px;fill:#3a3a3a">Springfield Nuclear Power Plant</text>
<g clip-path="url(#lc)" transform="translate(1297.5,589)"><line x1="-15.4" y1="-7" x2="-1.4000000000000004" y2="7" stroke="#d4d4d4" stroke-width="1.7"/><line x1="-11.2" y1="-7" x2="2.8" y2="7" stroke="#d4d4d4" stroke-width="1.7"/><line x1="-7.0" y1="-7" x2="7.0" y2="7" stroke="#d4d4d4" stroke-width="1.7"/><line x1="-2.8" y1="-7" x2="11.2" y2="7" stroke="#d4d4d4" stroke-width="1.7"/><line x1="1.4000000000000004" y1="-7" x2="15.4" y2="7" stroke="#d4d4d4" stroke-width="1.7"/></g>
<text x="1311.0" y="593.2" style="font-family:'Liberation Sans',sans-serif;font-size:11.9px;fill:#3a3a3a">New People</text>
<g clip-path="url(#lc)" transform="translate(1297.5,607)"><line x1="-15.4" y1="-7" x2="-1.4000000000000004" y2="7" stroke="#6ab3a0" stroke-width="1.7"/><line x1="-11.2" y1="-7" x2="2.8" y2="7" stroke="#6ab3a0" stroke-width="1.7"/><line x1="-7.0" y1="-7" x2="7.0" y2="7" stroke="#6ab3a0" stroke-width="1.7"/><line x1="-2.8" y1="-7" x2="11.2" y2="7" stroke="#6ab3a0" stroke-width="1.7"/><line x1="1.4000000000000004" y1="-7" x2="15.4" y2="7" stroke="#6ab3a0" stroke-width="1.7"/></g>
<text x="1311.0" y="611.2" style="font-family:'Liberation Sans',sans-serif;font-size:11.9px;fill:#3a3a3a">Homer Simpson</text>
<g clip-path="url(#lc)" transform="translate(1297.5,625)"><line x1="-15.4" y1="-7" x2="-1.4000000000000004" y2="7" stroke="#1f5c4d" stroke-width="1.7"/><line x1="-11.2" y1="-7" x2="2.8" y2="7" stroke="#1f5c4d" stroke-width="1.7"/><line x1="-7.0" y1="-7" x2="7.0" y2="7" stroke="#1f5c4d" stroke-width="1.7"/><line x1="-2.8" y1="-7" x2="11.2" y2="7" stroke="#1f5c4d" stroke-width="1.7"/><line x1="1.4000000000000004" y1="-7" x2="15.4" y2="7" stroke="#1f5c4d" stroke-width="1.7"/></g>
<text x="1311.0" y="629.2" style="font-family:'Liberation Sans',sans-serif;font-size:11.9px;fill:#3a3a3a">Evergreen Terrace District</text>
<g clip-path="url(#lc)" transform="translate(1507,571)"><line x1="-15.4" y1="-7" x2="-1.4000000000000004" y2="7" stroke="#d4d4d4" stroke-width="1.7"/><line x1="-11.2" y1="-7" x2="2.8" y2="7" stroke="#d4d4d4" stroke-width="1.7"/><line x1="-7.0" y1="-7" x2="7.0" y2="7" stroke="#d4d4d4" stroke-width="1.7"/><line x1="-2.8" y1="-7" x2="11.2" y2="7" stroke="#d4d4d4" stroke-width="1.7"/><line x1="1.4000000000000004" y1="-7" x2="15.4" y2="7" stroke="#d4d4d4" stroke-width="1.7"/></g>
<text x="1520.5" y="575.2" style="font-family:'Liberation Sans',sans-serif;font-size:11.9px;fill:#3a3a3a">Plant Expansion</text>
<g clip-path="url(#lc)" transform="translate(1507,589)"><line x1="-15.4" y1="-7" x2="-1.4000000000000004" y2="7" stroke="#d8d6b0" stroke-width="1.7"/><line x1="-11.2" y1="-7" x2="2.8" y2="7" stroke="#d8d6b0" stroke-width="1.7"/><line x1="-7.0" y1="-7" x2="7.0" y2="7" stroke="#d8d6b0" stroke-width="1.7"/><line x1="-2.8" y1="-7" x2="11.2" y2="7" stroke="#d8d6b0" stroke-width="1.7"/><line x1="1.4000000000000004" y1="-7" x2="15.4" y2="7" stroke="#d8d6b0" stroke-width="1.7"/></g>
<text x="1520.5" y="593.2" style="font-family:'Liberation Sans',sans-serif;font-size:11.9px;fill:#3a3a3a">Springfield Waterfront</text>
<g clip-path="url(#lc)" transform="translate(1507,607)"><line x1="-15.4" y1="-7" x2="-1.4000000000000004" y2="7" stroke="#a33a56" stroke-width="1.7"/><line x1="-11.2" y1="-7" x2="2.8" y2="7" stroke="#a33a56" stroke-width="1.7"/><line x1="-7.0" y1="-7" x2="7.0" y2="7" stroke="#a33a56" stroke-width="1.7"/><line x1="-2.8" y1="-7" x2="11.2" y2="7" stroke="#a33a56" stroke-width="1.7"/><line x1="1.4000000000000004" y1="-7" x2="15.4" y2="7" stroke="#a33a56" stroke-width="1.7"/></g>
<text x="1520.5" y="611.2" style="font-family:'Liberation Sans',sans-serif;font-size:11.9px;fill:#3a3a3a">Downtown Springfield</text>
<circle cx="1993" cy="571" r="5.2" fill="#4f9b85"/>
<text x="2006.5" y="575.2" style="font-family:'Liberation Sans',sans-serif;font-size:11.9px;fill:#3a3a3a">Springfield Waterfront</text>
<circle cx="1993" cy="589" r="5.2" fill="#cfcfcf"/>
<text x="2006.5" y="593.2" style="font-family:'Liberation Sans',sans-serif;font-size:11.9px;fill:#3a3a3a">New People</text>
<circle cx="1993" cy="607" r="5.2" fill="#6dbaa4"/>
<text x="2006.5" y="611.2" style="font-family:'Liberation Sans',sans-serif;font-size:11.9px;fill:#3a3a3a">Downtown Springfield</text>
<circle cx="1993" cy="625" r="5.2" fill="#0f5b47"/>
<text x="2006.5" y="629.2" style="font-family:'Liberation Sans',sans-serif;font-size:11.9px;fill:#3a3a3a">Evergreen Terrace District</text>
<circle cx="2202" cy="571" r="5.2" fill="#d8473a"/>
<text x="2215.5" y="575.2" style="font-family:'Liberation Sans',sans-serif;font-size:11.9px;fill:#3a3a3a">Plant Expansion</text>
<circle cx="2202" cy="589" r="5.2" fill="#d3d1a4"/>
<text x="2215.5" y="593.2" style="font-family:'Liberation Sans',sans-serif;font-size:11.9px;fill:#3a3a3a">Homer Simpson</text>
<circle cx="2202" cy="607" r="5.2" fill="#a63f58"/>
<text x="2215.5" y="611.2" style="font-family:'Liberation Sans',sans-serif;font-size:11.9px;fill:#3a3a3a">Springfield Nuclear Power Plant</text>
<g clip-path="url(#lc)" transform="translate(602.5,1047)"><line x1="-15.4" y1="-7" x2="-1.4000000000000004" y2="7" stroke="#3a9a84" stroke-width="1.7"/><line x1="-11.2" y1="-7" x2="2.8" y2="7" stroke="#3a9a84" stroke-width="1.7"/><line x1="-7.0" y1="-7" x2="7.0" y2="7" stroke="#3a9a84" stroke-width="1.7"/><line x1="-2.8" y1="-7" x2="11.2" y2="7" stroke="#3a9a84" stroke-width="1.7"/><line x1="1.4000000000000004" y1="-7" x2="15.4" y2="7" stroke="#3a9a84" stroke-width="1.7"/></g>
<text x="616.0" y="1051.2" style="font-family:'Liberation Sans',sans-serif;font-size:11.9px;fill:#3a3a3a">Springfield Nuclear Power Plant</text>
<g clip-path="url(#lc)" transform="translate(602.5,1065)"><line x1="-15.4" y1="-7" x2="-1.4000000000000004" y2="7" stroke="#d4d4d4" stroke-width="1.7"/><line x1="-11.2" y1="-7" x2="2.8" y2="7" stroke="#d4d4d4" stroke-width="1.7"/><line x1="-7.0" y1="-7" x2="7.0" y2="7" stroke="#d4d4d4" stroke-width="1.7"/><line x1="-2.8" y1="-7" x2="11.2" y2="7" stroke="#d4d4d4" stroke-width="1.7"/><line x1="1.4000000000000004" y1="-7" x2="15.4" y2="7" stroke="#d4d4d4" stroke-width="1.7"/></g>
<text x="616.0" y="1069.2" style="font-family:'Liberation Sans',sans-serif;font-size:11.9px;fill:#3a3a3a">New People</text>
<g clip-path="url(#lc)" transform="translate(602.5,1083)"><line x1="-15.4" y1="-7" x2="-1.4000000000000004" y2="7" stroke="#6ab3a0" stroke-width="1.7"/><line x1="-11.2" y1="-7" x2="2.8" y2="7" stroke="#6ab3a0" stroke-width="1.7"/><line x1="-7.0" y1="-7" x2="7.0" y2="7" stroke="#6ab3a0" stroke-width="1.7"/><line x1="-2.8" y1="-7" x2="11.2" y2="7" stroke="#6ab3a0" stroke-width="1.7"/><line x1="1.4000000000000004" y1="-7" x2="15.4" y2="7" stroke="#6ab3a0" stroke-width="1.7"/></g>
<text x="616.0" y="1087.2" style="font-family:'Liberation Sans',sans-serif;font-size:11.9px;fill:#3a3a3a">Homer Simpson</text>
<g clip-path="url(#lc)" transform="translate(602.5,1101)"><line x1="-15.4" y1="-7" x2="-1.4000000000000004" y2="7" stroke="#1f5c4d" stroke-width="1.7"/><line x1="-11.2" y1="-7" x2="2.8" y2="7" stroke="#1f5c4d" stroke-width="1.7"/><line x1="-7.0" y1="-7" x2="7.0" y2="7" stroke="#1f5c4d" stroke-width="1.7"/><line x1="-2.8" y1="-7" x2="11.2" y2="7" stroke="#1f5c4d" stroke-width="1.7"/><line x1="1.4000000000000004" y1="-7" x2="15.4" y2="7" stroke="#1f5c4d" stroke-width="1.7"/></g>
<text x="616.0" y="1105.2" style="font-family:'Liberation Sans',sans-serif;font-size:11.9px;fill:#3a3a3a">Evergreen Terrace District</text>
<g clip-path="url(#lc)" transform="translate(812,1047)"><line x1="-15.4" y1="-7" x2="-1.4000000000000004" y2="7" stroke="#d4d4d4" stroke-width="1.7"/><line x1="-11.2" y1="-7" x2="2.8" y2="7" stroke="#d4d4d4" stroke-width="1.7"/><line x1="-7.0" y1="-7" x2="7.0" y2="7" stroke="#d4d4d4" stroke-width="1.7"/><line x1="-2.8" y1="-7" x2="11.2" y2="7" stroke="#d4d4d4" stroke-width="1.7"/><line x1="1.4000000000000004" y1="-7" x2="15.4" y2="7" stroke="#d4d4d4" stroke-width="1.7"/></g>
<text x="825.5" y="1051.2" style="font-family:'Liberation Sans',sans-serif;font-size:11.9px;fill:#3a3a3a">Plant Expansion</text>
<g clip-path="url(#lc)" transform="translate(812,1065)"><line x1="-15.4" y1="-7" x2="-1.4000000000000004" y2="7" stroke="#d8d6b0" stroke-width="1.7"/><line x1="-11.2" y1="-7" x2="2.8" y2="7" stroke="#d8d6b0" stroke-width="1.7"/><line x1="-7.0" y1="-7" x2="7.0" y2="7" stroke="#d8d6b0" stroke-width="1.7"/><line x1="-2.8" y1="-7" x2="11.2" y2="7" stroke="#d8d6b0" stroke-width="1.7"/><line x1="1.4000000000000004" y1="-7" x2="15.4" y2="7" stroke="#d8d6b0" stroke-width="1.7"/></g>
<text x="825.5" y="1069.2" style="font-family:'Liberation Sans',sans-serif;font-size:11.9px;fill:#3a3a3a">Springfield Waterfront</text>
<g clip-path="url(#lc)" transform="translate(812,1083)"><line x1="-15.4" y1="-7" x2="-1.4000000000000004" y2="7" stroke="#a33a56" stroke-width="1.7"/><line x1="-11.2" y1="-7" x2="2.8" y2="7" stroke="#a33a56" stroke-width="1.7"/><line x1="-7.0" y1="-7" x2="7.0" y2="7" stroke="#a33a56" stroke-width="1.7"/><line x1="-2.8" y1="-7" x2="11.2" y2="7" stroke="#a33a56" stroke-width="1.7"/><line x1="1.4000000000000004" y1="-7" x2="15.4" y2="7" stroke="#a33a56" stroke-width="1.7"/></g>
<text x="825.5" y="1087.2" style="font-family:'Liberation Sans',sans-serif;font-size:11.9px;fill:#3a3a3a">Downtown Springfield</text>
</svg>
<svg class="a" style="left:0;top:1276px" width="12" height="12" viewBox="0 0 12 12"><path d="M0,0 A12,12 0 0 0 12,12 H0 Z" fill="#777"/></svg>
<svg class="a" style="left:2545px;top:1274px" width="14" height="14" viewBox="0 0 14 14"><path d="M14,0 A14,14 0 0 1 0,14 H14 Z" fill="#666"/></svg>
</body></html>
